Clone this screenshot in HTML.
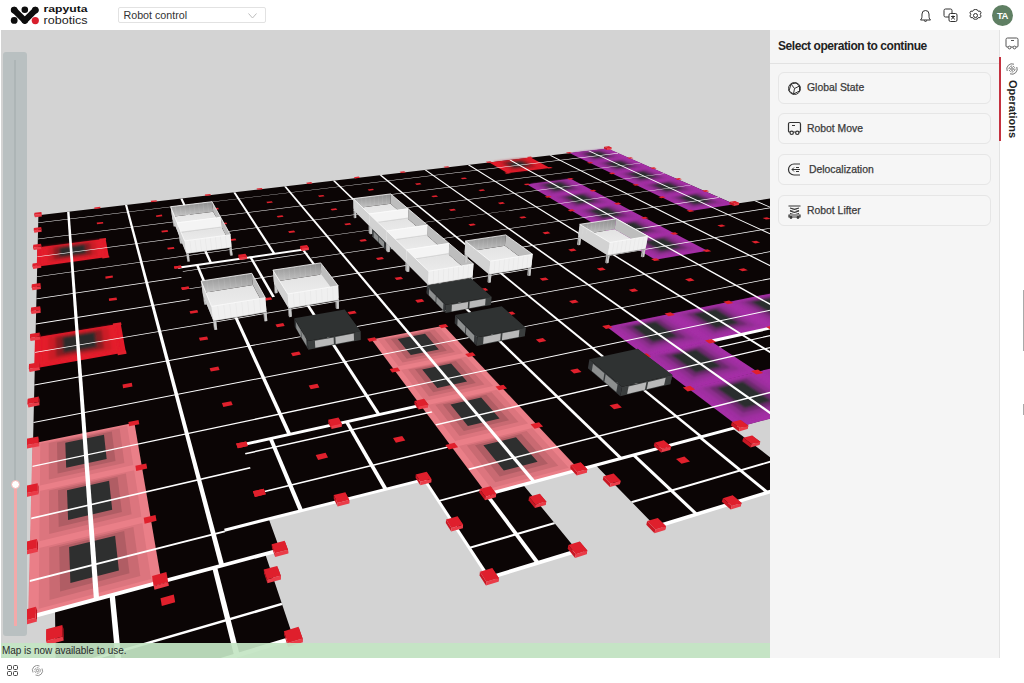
<!DOCTYPE html>
<html lang="en">
<head>
<meta charset="utf-8">
<title>Robot control</title>
<style>
*{box-sizing:border-box;margin:0;padding:0}
html,body{width:1024px;height:683px;overflow:hidden;background:#fff;font-family:"Liberation Sans",sans-serif;color:#222}
#hdr{position:absolute;left:0;top:0;width:1024px;height:30px;background:#fff}
#logo{position:absolute;left:0;top:0}
#sel{position:absolute;left:118px;top:7px;width:148px;height:16px;border:1px solid #e2e2e2;border-radius:2px;background:#fff;font-size:10.7px;line-height:14px;color:#333;padding-left:4.5px}
#sel svg{position:absolute;right:8px;top:5px}
#hicons{position:absolute;left:900px;top:0;width:124px;height:30px}
#avatar{position:absolute;left:992px;top:5px;width:21px;height:21px;border-radius:50%;background:#5f7f63;color:#fff;font-size:9.5px;font-weight:bold;text-align:center;line-height:21px;letter-spacing:-0.5px}
#view{position:absolute;left:1px;top:30px;width:769px;height:628px;background:#d3d3d3;overflow:hidden}
#scene{position:absolute;left:-1px;top:-30px}
#slider{position:absolute;left:2px;top:22px;width:24px;height:584px;border-radius:3px;background:#b9c0c1}
#toast{position:absolute;left:0;top:613px;width:769px;height:15px;background:rgba(196,229,196,0.93);font-size:10px;line-height:15px;color:#2a2a2a;padding-left:1px;letter-spacing:-0.04px}
#panel{position:absolute;left:770px;top:30px;width:230px;height:628px;background:#f5f5f5;border-right:1px solid #e3e3e3}
#ptitle{position:absolute;left:8px;top:8px;font-size:12px;font-weight:bold;letter-spacing:-0.45px;color:#222;line-height:16px;white-space:nowrap}
#pdiv{position:absolute;left:0;top:33px;width:229px;height:1px;background:#e2e2e2}
.op{position:absolute;left:8px;width:213px;height:31.4px;border:1px solid #e6e6e6;border-radius:6px;background:#f6f6f6;font-size:10.4px;line-height:30.4px;color:#3a3a3a;-webkit-text-stroke:0.25px #3a3a3a;padding-left:28px;white-space:nowrap}
.op svg{position:absolute;left:8px;top:7.5px}
#rail{position:absolute;left:1000px;top:30px;width:24px;height:628px;background:#fff}
#redbar{position:absolute;left:-1px;top:27px;width:2px;height:84px;background:#c4313f}
#optxt{position:absolute;left:4px;top:50px;width:18px;height:64px;writing-mode:vertical-rl;font-size:11px;font-weight:bold;color:#222;line-height:18px;white-space:nowrap}
#foot{position:absolute;left:0;top:658px;width:1024px;height:25px;background:#fff}
</style>
</head>
<body>
<div id="hdr">
<svg id="logo" width="100" height="30" viewBox="0 0 100 30">
<g fill="#0d0d0d">
<circle cx="14.2" cy="10.1" r="3.4"/><circle cx="35.3" cy="10.1" r="3.4"/>
<circle cx="14.2" cy="20.4" r="3.4"/>
<path d="M14.2 10.1 L24.8 20.6 L35.3 10.1" fill="none" stroke="#0d0d0d" stroke-width="6.2" stroke-linejoin="round" stroke-linecap="round"/>
<circle cx="24.8" cy="20.6" r="3.3"/>
<circle cx="24.8" cy="9.6" r="4.5" fill="#fff"/>
<circle cx="24.8" cy="9.7" r="3.3"/>
</g>
<circle cx="35.3" cy="20.6" r="3.6" fill="#d81e2c"/>
<text x="43.5" y="12" font-family="Liberation Sans, sans-serif" font-weight="bold" font-size="9.5" fill="#111" textLength="44" lengthAdjust="spacingAndGlyphs">rapyuta</text>
<text x="43.5" y="24.2" font-family="Liberation Sans, sans-serif" font-size="11" fill="#222" textLength="44" lengthAdjust="spacingAndGlyphs">robotics</text>
</svg>
<div id="sel">Robot control<svg width="9" height="6" viewBox="0 0 9 6"><path d="M0.5 0.5 L4.5 5 L8.5 0.5" fill="none" stroke="#bdbdbd" stroke-width="1"/></svg></div>
<div id="hicons">
<svg width="124" height="30" viewBox="0 0 124 30">
<g fill="none" stroke="#333" stroke-width="1">
<path d="M20.5 20 h10 c-1.5 -1.5 -1.5 -2.5 -1.5 -6 a3.5 3.5 0 0 0 -7 0 c0 3.500 0 4.500 -1.500 6 z M24.3 20.3 a1.2 1.200 0 0 0 2.400 0"/>
<rect x="44" y="9" width="8" height="8" rx="1.500"/><rect x="49" y="13.500" width="8" height="8" rx="1.500" fill="#fff"/>
<path d="M51 16.5 h4 M53 15.500 v1 M51.500 19.500 l1.500 -2.500 l1.500 2.500"/>
<circle cx="75.500" cy="15.500" r="2"/>
<path d="M75.500 9.500 l1.800 0.300 l1 1.500 l1.800 -0.200 l1 1.700 l-0.900 1.500 l0.900 1.700 l-1 1.700 l-1.800 -0.200 l-1 1.500 l-1.800 0.300 l-1.800 -0.300 l-1 -1.500 l-1.800 0.200 l-1 -1.700 l0.900 -1.700 l-0.900 -1.500 l1 -1.700 l1.800 0.200 l1 -1.500 z"/>
</g>
</svg>
</div>
<div id="avatar">TA</div>
</div>
<div id="view">
<svg id="scene" width="770" height="658" viewBox="0 0 770 658">
<defs>
<filter id="bpurple" x="-5%" y="-5%" width="110%" height="110%"><feGaussianBlur stdDeviation="0.9"/></filter>
<filter id="bred" x="-5%" y="-5%" width="110%" height="110%"><feGaussianBlur stdDeviation="1.8"/></filter>
<linearGradient id="gfl" x1="0" y1="0" x2="0" y2="1"><stop offset="0" stop-color="#e3e3e3"/><stop offset="1" stop-color="#f1f1f1"/></linearGradient>
<linearGradient id="gbk" x1="0" y1="0" x2="0" y2="1"><stop offset="0" stop-color="#8c8c8c"/><stop offset="1" stop-color="#c6c6c6"/></linearGradient>
</defs><polygon points="38.4,215.3 607.6,148.7 734.1,204.1 854.5,185.7 1193.9,304.6 732.6,428.5 802.2,481.8 655.8,526.7 595.8,465.2 523.1,484.7 577.2,550.8 489.0,577.9 423.4,479.6 268.8,518.9 280.0,550.0 265.2,554.0 293.4,637.9 56.3,710.7 55.0,610.4 28.9,617.4" fill="#0b0505"/>
<polygon points="37.2,247.6 105.6,238.8 108.9,256.8 36.8,266.7" fill="#e31b2a"/>
<g filter="url(#bred)">
<polygon points="42.5,247.6 100.7,240.0 103.3,255.9 42.3,264.2" fill="#e31b2a"/>
<polygon points="48.0,247.4 95.5,241.2 97.6,255.2 48.1,261.9" fill="#cc1a27"/>
<polygon points="53.5,247.2 90.2,242.4 91.8,254.4 53.8,259.5" fill="#8a1a20"/>
<polygon points="59.1,247.2 84.9,243.8 86.1,253.7 59.4,257.3" fill="#2c2b2b"/>
</g>
<polygon points="35.0,337.6 120.7,323.6 125.9,352.3 34.2,368.4" fill="#e31b2a"/>
<g filter="url(#bred)">
<polygon points="41.6,337.6 114.7,325.6 118.8,350.9 41.4,364.4" fill="#e31b2a"/>
<polygon points="48.6,337.3 108.2,327.5 111.4,349.7 48.7,360.5" fill="#cc1a27"/>
<polygon points="55.6,337.0 101.6,329.4 104.1,348.5 56.0,356.8" fill="#8a1a20"/>
<polygon points="62.5,337.0 95.0,331.6 96.8,347.3 63.2,353.1" fill="#2c2b2b"/>
</g>
<polygon points="489.3,162.4 530.6,157.6 550.0,167.9 507.4,173.1" fill="#e31b2a"/>
<g filter="url(#bred)">
<polygon points="493.1,162.4 528.2,158.3 545.2,167.3 509.1,171.7" fill="#e31b2a"/>
<polygon points="496.9,162.3 525.5,159.0 540.3,166.9 511.0,170.5" fill="#cc1a27"/>
<polygon points="500.8,162.3 522.8,159.7 535.4,166.5 512.9,169.2" fill="#8a1a20"/>
<polygon points="504.8,162.3 520.3,160.4 530.6,166.0 514.8,167.9" fill="#2c2b2b"/>
</g>
<polygon points="32.4,443.4 134.4,422.7 161.6,582.3 28.1,618.1" fill="#ea7f88"/>
<g>
<polygon points="40.3,443.4 127.2,425.7 133.3,464.9 39.9,485.4" fill="#dc757e"/>
<polygon points="48.7,443.0 119.6,428.5 124.4,463.0 48.9,479.4" fill="#c96a72"/>
<polygon points="57.0,442.6 111.8,431.4 115.5,461.0 57.6,473.6" fill="#b05d64"/>
<polygon points="65.3,442.7 104.0,434.7 106.7,459.1 66.2,467.8" fill="#2e2f2f"/>
<polygon points="39.8,491.1 134.2,470.2 141.4,516.7 39.3,541.2" fill="#dc757e"/>
<polygon points="48.9,490.6 125.9,473.5 131.6,514.3 49.2,534.0" fill="#c96a72"/>
<polygon points="58.0,490.2 117.5,476.9 121.9,512.0 58.7,527.0" fill="#b05d64"/>
<polygon points="67.0,490.2 109.1,480.8 112.2,509.8 68.1,520.1" fill="#2e2f2f"/>
<polygon points="39.3,548.0 142.4,522.9 151.1,578.9 38.7,608.8" fill="#dc757e"/>
<polygon points="49.2,547.5 133.4,526.9 140.3,576.1 49.5,600.0" fill="#c96a72"/>
<polygon points="59.2,546.9 124.2,531.0 129.5,573.3 60.1,591.5" fill="#b05d64"/>
<polygon points="69.1,547.0 115.1,535.7 118.9,570.5 70.4,583.1" fill="#2e2f2f"/>
</g>
<polygon points="371.5,339.4 443.8,325.8 579.3,470.0 487.3,494.7" fill="#ea7f88"/>
<g>
<polygon points="377.9,339.4 439.4,327.8 463.0,353.3 398.4,366.3" fill="#dc757e"/>
<polygon points="384.4,339.1 434.6,329.6 454.9,352.1 402.6,362.6" fill="#c96a72"/>
<polygon points="390.9,338.9 429.7,331.5 446.9,350.8 406.7,358.8" fill="#b05d64"/>
<polygon points="397.7,338.9 425.0,333.7 438.9,349.6 410.8,355.1" fill="#2e2f2f"/>
<polygon points="401.1,369.9 466.1,356.7 493.2,385.9 424.7,400.9" fill="#dc757e"/>
<polygon points="408.1,369.6 461.1,358.8 484.4,384.5 429.0,396.6" fill="#c96a72"/>
<polygon points="415.0,369.3 456.0,361.0 475.8,383.0 433.2,392.3" fill="#b05d64"/>
<polygon points="422.2,369.4 451.1,363.4 467.1,381.6 437.3,388.0" fill="#2e2f2f"/>
<polygon points="427.8,405.1 496.8,389.8 528.1,423.6 455.2,441.1" fill="#dc757e"/>
<polygon points="435.3,404.7 491.5,392.2 518.5,421.9 459.5,436.0" fill="#c96a72"/>
<polygon points="442.8,404.4 486.2,394.7 509.1,420.3 463.8,431.0" fill="#b05d64"/>
<polygon points="450.5,404.5 481.2,397.6 499.6,418.6 467.9,426.1" fill="#2e2f2f"/>
<polygon points="458.9,445.9 532.2,428.1 568.8,467.7 491.1,488.3" fill="#dc757e"/>
<polygon points="466.9,445.6 526.7,431.0 558.3,465.7 495.4,482.3" fill="#c96a72"/>
<polygon points="475.0,445.2 521.2,433.9 547.9,463.8 499.7,476.4" fill="#b05d64"/>
<polygon points="483.4,445.2 516.0,437.2 537.6,461.8 503.8,470.6" fill="#2e2f2f"/>
</g>
<polygon points="569.4,153.1 607.7,148.6 734.5,204.2 690.3,211.0" fill="#a52fa6"/>
<g filter="url(#bpurple)">
<polygon points="573.0,153.1 605.6,149.2 624.6,157.6 591.2,161.7" fill="#9f2ea0"/>
<polygon points="576.7,153.0 603.2,149.9 619.8,157.2 592.6,160.5" fill="#8e2d8f"/>
<polygon points="580.4,152.9 600.9,150.5 615.0,156.8 594.1,159.3" fill="#6c2c6d"/>
<polygon points="584.2,152.9 598.7,151.2 610.2,156.4 595.5,158.2" fill="#2c2f2f"/>
<polygon points="593.5,162.8 627.0,158.7 647.5,167.7 613.1,172.1" fill="#9f2ea0"/>
<polygon points="597.3,162.7 624.6,159.4 642.5,167.3 614.6,170.9" fill="#8e2d8f"/>
<polygon points="601.1,162.6 622.2,160.0 637.4,166.9 616.0,169.6" fill="#6c2c6d"/>
<polygon points="605.1,162.7 620.0,160.8 632.4,166.4 617.4,168.3" fill="#2c2f2f"/>
<polygon points="615.7,173.3 650.2,168.9 672.3,178.7 636.9,183.5" fill="#9f2ea0"/>
<polygon points="619.6,173.3 647.7,169.6 667.0,178.2 638.3,182.1" fill="#8e2d8f"/>
<polygon points="623.6,173.2 645.3,170.3 661.8,177.7 639.7,180.7" fill="#6c2c6d"/>
<polygon points="627.8,173.2 643.0,171.2 656.5,177.3 641.0,179.3" fill="#2c2f2f"/>
<polygon points="639.7,184.8 675.2,179.9 699.3,190.5 662.8,195.8" fill="#9f2ea0"/>
<polygon points="643.8,184.7 672.7,180.7 693.7,190.0 664.1,194.3" fill="#8e2d8f"/>
<polygon points="647.9,184.6 670.2,181.5 688.2,189.5 665.4,192.8" fill="#6c2c6d"/>
<polygon points="652.3,184.6 668.0,182.4 682.6,189.0 666.6,191.3" fill="#2c2f2f"/>
<polygon points="665.8,197.2 702.4,191.9 728.6,203.5 691.1,209.2" fill="#9f2ea0"/>
<polygon points="670.1,197.1 699.9,192.8 722.8,202.9 692.3,207.6" fill="#8e2d8f"/>
<polygon points="674.4,197.0 697.4,193.6 716.9,202.4 693.5,205.9" fill="#6c2c6d"/>
<polygon points="678.9,197.0 695.1,194.6 711.1,201.8 694.6,204.3" fill="#2c2f2f"/>
</g>
<polygon points="526.7,184.3 570.6,178.7 707.4,250.7 655.3,259.8" fill="#a52fa6"/>
<g filter="url(#bpurple)">
<polygon points="530.8,184.3 568.1,179.5 588.1,190.1 549.6,195.3" fill="#9f2ea0"/>
<polygon points="534.9,184.2 565.3,180.3 582.7,189.6 551.5,193.8" fill="#8e2d8f"/>
<polygon points="539.0,184.1 562.5,181.1 577.4,189.1 553.4,192.3" fill="#6c2c6d"/>
<polygon points="543.4,184.2 560.0,182.0 572.0,188.6 555.2,190.8" fill="#2c2f2f"/>
<polygon points="552.1,196.7 590.7,191.5 612.4,203.0 572.7,208.7" fill="#9f2ea0"/>
<polygon points="556.4,196.6 587.8,192.3 606.8,202.5 574.5,207.1" fill="#8e2d8f"/>
<polygon points="560.7,196.5 585.0,193.2 601.1,201.9 576.3,205.4" fill="#6c2c6d"/>
<polygon points="565.3,196.5 582.4,194.2 595.5,201.4 578.1,203.8" fill="#2c2f2f"/>
<polygon points="575.4,210.3 615.2,204.5 639.1,217.2 598.0,223.4" fill="#9f2ea0"/>
<polygon points="579.9,210.2 612.4,205.5 633.1,216.5 599.7,221.6" fill="#8e2d8f"/>
<polygon points="584.4,210.0 609.5,206.4 627.1,215.9 601.5,219.8" fill="#6c2c6d"/>
<polygon points="589.1,210.1 606.8,207.5 621.2,215.3 603.2,218.0" fill="#2c2f2f"/>
<polygon points="600.9,225.1 642.1,218.8 668.3,232.7 625.8,239.6" fill="#9f2ea0"/>
<polygon points="605.6,225.0 639.2,219.8 662.0,232.0 627.5,237.6" fill="#8e2d8f"/>
<polygon points="610.3,224.9 636.3,220.9 655.7,231.3 629.1,235.6" fill="#6c2c6d"/>
<polygon points="615.3,224.9 633.6,222.1 649.4,230.7 630.8,233.7" fill="#2c2f2f"/>
<polygon points="629.0,241.5 671.7,234.5 700.6,249.8 656.5,257.5" fill="#9f2ea0"/>
<polygon points="633.9,241.3 668.7,235.6 693.9,249.1 658.1,255.3" fill="#8e2d8f"/>
<polygon points="638.9,241.2 665.8,236.8 687.2,248.3 659.7,253.1" fill="#6c2c6d"/>
<polygon points="644.1,241.2 663.0,238.1 680.5,247.6 661.2,250.9" fill="#2c2f2f"/>
</g>
<polygon points="606.7,326.8 1018.8,243.1 1071.6,261.6 645.2,355.9" fill="#a52fa6"/>
<g filter="url(#bpurple)">
<polygon points="612.9,326.8 666.5,315.9 702.6,339.9 646.8,352.2" fill="#9f2ea0"/>
<polygon points="619.1,326.5 662.8,317.6 694.2,338.7 648.9,348.6" fill="#8e2d8f"/>
<polygon points="625.3,326.3 659.1,319.4 685.8,337.6 651.0,345.1" fill="#6c2c6d"/>
<polygon points="631.8,326.3 655.6,321.5 677.4,336.4 653.0,341.7" fill="#2c2f2f"/>
<polygon points="675.0,314.1 725.5,303.9 763.8,326.5 711.4,338.0" fill="#9f2ea0"/>
<polygon points="681.0,313.9 722.1,305.5 755.5,325.4 713.0,334.6" fill="#8e2d8f"/>
<polygon points="686.9,313.7 718.7,307.2 747.1,324.3 714.5,331.4" fill="#6c2c6d"/>
<polygon points="693.3,313.7 715.7,309.1 738.9,323.2 716.0,328.1" fill="#2c2f2f"/>
<polygon points="733.5,302.2 781.1,292.5 821.3,313.9 772.1,324.7" fill="#9f2ea0"/>
<polygon points="739.2,302.0 778.0,294.1 813.0,312.8 773.1,321.5" fill="#8e2d8f"/>
<polygon points="745.0,301.8 775.0,295.7 804.8,311.8 774.1,318.4" fill="#6c2c6d"/>
<polygon points="751.2,301.8 772.3,297.5 796.7,310.8 775.1,315.4" fill="#2c2f2f"/>
<polygon points="788.6,291.0 833.6,281.8 875.4,302.0 829.1,312.2" fill="#9f2ea0"/>
<polygon points="794.2,290.8 830.9,283.3 867.3,301.0 829.7,309.2" fill="#8e2d8f"/>
<polygon points="799.8,290.6 828.1,284.8 859.2,300.0 830.2,306.3" fill="#6c2c6d"/>
<polygon points="805.8,290.6 825.7,286.5 851.1,299.0 830.8,303.4" fill="#2c2f2f"/>
<polygon points="840.7,280.4 883.3,271.7 926.5,290.8 882.8,300.4" fill="#9f2ea0"/>
<polygon points="846.1,280.2 880.8,273.1 918.5,289.8 883.0,297.6" fill="#8e2d8f"/>
<polygon points="851.5,280.0 878.3,274.5 910.5,288.9 883.1,294.8" fill="#6c2c6d"/>
<polygon points="857.4,280.0 876.2,276.2 902.5,288.0 883.3,292.1" fill="#2c2f2f"/>
<polygon points="890.0,270.3 930.4,262.1 974.7,280.2 933.4,289.2" fill="#9f2ea0"/>
<polygon points="895.3,270.2 928.1,263.5 966.8,279.3 933.3,286.6" fill="#8e2d8f"/>
<polygon points="900.5,270.0 925.9,264.8 958.9,278.4 933.1,284.0" fill="#6c2c6d"/>
<polygon points="906.2,270.0 924.0,266.3 951.1,277.6 932.9,281.5" fill="#2c2f2f"/>
<polygon points="936.8,260.8 975.0,253.0 1020.4,270.1 981.3,278.7" fill="#9f2ea0"/>
<polygon points="941.8,260.7 973.0,254.3 1012.6,269.3 980.8,276.2" fill="#8e2d8f"/>
<polygon points="946.9,260.5 971.0,255.6 1004.8,268.5 980.3,273.8" fill="#6c2c6d"/>
<polygon points="952.4,260.5 969.4,257.0 997.1,267.7 979.9,271.4" fill="#2c2f2f"/>
<polygon points="981.1,251.8 1017.5,244.4 1063.7,260.6 1026.6,268.8" fill="#9f2ea0"/>
<polygon points="986.0,251.6 1015.6,245.6 1056.0,259.9 1025.8,266.4" fill="#8e2d8f"/>
<polygon points="990.9,251.5 1013.8,246.8 1048.3,259.1 1025.1,264.1" fill="#6c2c6d"/>
<polygon points="996.3,251.5 1012.4,248.2 1040.7,258.3 1024.4,261.8" fill="#2c2f2f"/>
</g>
<polygon points="644.7,355.5 710.6,341.0 757.9,372.1 688.8,388.9" fill="#a52fa6"/>
<g filter="url(#bpurple)">
<polygon points="651.3,355.5 707.4,343.1 748.6,370.5 690.1,384.6" fill="#9f2ea0"/>
<polygon points="657.9,355.3 703.6,345.1 739.4,369.2 692.0,380.5" fill="#8e2d8f"/>
<polygon points="664.5,355.0 699.8,347.1 730.3,367.8 693.9,376.5" fill="#6c2c6d"/>
<polygon points="671.5,355.0 696.4,349.5 721.2,366.5 695.7,372.5" fill="#2c2f2f"/>
</g>
<polygon points="688.2,388.5 1128.9,281.7 1194.6,304.7 739.2,427.0" fill="#a52fa6"/>
<g filter="url(#bpurple)">
<polygon points="695.3,388.4 754.0,374.1 801.4,405.7 740.2,422.0" fill="#9f2ea0"/>
<polygon points="702.3,388.1 750.2,376.4 791.4,404.2 741.7,417.3" fill="#8e2d8f"/>
<polygon points="709.4,387.8 746.4,378.8 781.4,402.6 743.3,412.6" fill="#6c2c6d"/>
<polygon points="716.9,387.9 742.9,381.5 771.5,401.1 744.8,408.0" fill="#2c2f2f"/>
<polygon points="763.3,371.9 818.1,358.6 868.0,388.0 811.0,403.2" fill="#9f2ea0"/>
<polygon points="770.0,371.6 814.7,360.7 858.1,386.6 811.9,398.8" fill="#8e2d8f"/>
<polygon points="776.8,371.3 811.3,362.9 848.3,385.1 812.8,394.4" fill="#6c2c6d"/>
<polygon points="784.0,371.4 808.4,365.4 838.5,383.7 813.6,390.2" fill="#2c2f2f"/>
<polygon points="826.7,356.5 878.1,344.0 929.9,371.5 876.9,385.6" fill="#9f2ea0"/>
<polygon points="833.2,356.2 875.0,346.0 920.2,370.2 877.2,381.5" fill="#8e2d8f"/>
<polygon points="839.7,355.9 872.0,348.0 910.6,368.8 877.5,377.5" fill="#6c2c6d"/>
<polygon points="846.7,356.0 869.5,350.4 901.0,367.5 877.7,373.5" fill="#2c2f2f"/>
<polygon points="886.1,342.0 934.3,330.3 987.8,356.1 938.3,369.3" fill="#9f2ea0"/>
<polygon points="892.4,341.8 931.6,332.2 978.2,354.8 938.0,365.5" fill="#8e2d8f"/>
<polygon points="898.6,341.5 928.9,334.1 968.7,353.6 937.8,361.7" fill="#6c2c6d"/>
<polygon points="905.4,341.5 926.8,336.3 959.3,352.3 937.6,358.0" fill="#2c2f2f"/>
<polygon points="941.8,328.5 987.0,317.5 1042.0,341.7 995.6,354.0" fill="#9f2ea0"/>
<polygon points="947.9,328.2 984.7,319.2 1032.6,340.5 994.9,350.4" fill="#8e2d8f"/>
<polygon points="953.9,328.0 982.3,321.0 1023.2,339.3 994.2,346.9" fill="#6c2c6d"/>
<polygon points="960.5,328.0 980.5,323.1 1013.9,338.2 993.6,343.4" fill="#2c2f2f"/>
<polygon points="994.2,315.7 1036.7,305.4 1092.7,328.2 1049.3,339.7" fill="#9f2ea0"/>
<polygon points="1000.0,315.5 1034.6,307.1 1083.5,327.1 1048.2,336.4" fill="#8e2d8f"/>
<polygon points="1005.8,315.3 1032.5,308.7 1074.3,325.9 1047.1,333.1" fill="#6c2c6d"/>
<polygon points="1012.2,315.3 1031.0,310.7 1065.2,324.8 1046.1,329.8" fill="#2c2f2f"/>
<polygon points="1043.4,303.7 1083.6,294.0 1140.5,315.5 1099.6,326.3" fill="#9f2ea0"/>
<polygon points="1049.1,303.5 1081.7,295.6 1131.4,314.4 1098.2,323.2" fill="#8e2d8f"/>
<polygon points="1054.7,303.3 1079.9,297.2 1122.4,313.4 1096.8,320.1" fill="#6c2c6d"/>
<polygon points="1060.9,303.4 1078.6,299.0 1113.4,312.3 1095.4,317.0" fill="#2c2f2f"/>
<polygon points="1089.9,292.4 1127.8,283.2 1185.4,303.5 1146.9,313.7" fill="#9f2ea0"/>
<polygon points="1095.3,292.2 1126.2,284.7 1176.5,302.5 1145.2,310.8" fill="#8e2d8f"/>
<polygon points="1100.8,292.1 1124.6,286.2 1167.6,301.5 1143.5,307.8" fill="#6c2c6d"/>
<polygon points="1106.8,292.1 1123.6,288.0 1158.8,300.6 1141.8,304.9" fill="#2c2f2f"/>
</g>
<polygon points="67.1,211.9 69.5,211.6 99.1,598.6 93.9,600.0" fill="#fff"/>
<polygon points="125.0,205.1 127.2,204.9 224.2,565.0 219.4,566.3" fill="#fff"/>
<polygon points="284.1,186.5 286.1,186.3 535.8,481.3 532.2,482.3" fill="#fff"/>
<polygon points="332.9,180.8 334.8,180.6 622.8,458.0 619.5,458.9" fill="#fff"/>
<polygon points="379.6,175.3 381.5,175.1 703.0,436.4 699.9,437.3" fill="#fff"/>
<polygon points="424.6,170.1 426.4,169.9 777.2,416.5 774.3,417.3" fill="#fff"/>
<polygon points="467.8,165.0 469.5,164.8 846.0,398.0 843.3,398.8" fill="#fff"/>
<polygon points="509.4,160.2 511.1,160.0 910.0,380.9 907.5,381.5" fill="#fff"/>
<polygon points="549.5,155.5 551.1,155.3 969.6,364.8 967.3,365.5" fill="#fff"/>
<polygon points="588.1,151.0 589.6,150.8 1025.4,349.9 1023.2,350.4" fill="#fff"/>
<polygon points="180.3,198.7 182.5,198.4 211.9,262.2 209.3,262.6" fill="#fff"/>
<polygon points="233.6,316.1 236.6,315.6 291.3,433.9 287.5,434.8" fill="#fff"/>
<polygon points="233.3,192.5 235.4,192.2 275.2,253.1 272.7,253.4" fill="#fff"/>
<polygon points="305.5,304.1 308.3,303.6 380.6,414.2 377.2,415.0" fill="#fff"/>
<polygon points="754.4,201.0 756.1,200.8 1077.6,335.8 1075.6,336.4" fill="#fff"/>
<polygon points="795.4,194.7 797.0,194.5 1126.6,322.7 1124.7,323.2" fill="#fff"/>
<polygon points="834.7,188.7 836.2,188.5 1172.7,310.3 1171.0,310.8" fill="#fff"/>
<polygon points="38.2,222.6 617.8,153.1 618.4,153.4 38.2,223.0" fill="#fff"/>
<polygon points="37.8,238.7 640.0,162.9 640.7,163.2 37.8,239.2" fill="#fff"/>
<polygon points="37.4,256.5 664.1,173.4 664.8,173.8 37.4,257.1" fill="#fff"/>
<polygon points="36.9,276.4 690.1,184.9 691.0,185.2 36.9,277.0" fill="#fff"/>
<polygon points="36.4,298.6 181.3,277.1 181.5,277.7 36.4,299.3" fill="#fff"/>
<polygon points="311.1,257.8 718.5,197.3 719.4,197.7 311.5,258.3" fill="#fff"/>
<polygon points="35.8,323.6 189.4,299.3 189.6,300.0 35.8,324.4" fill="#fff"/>
<polygon points="326.0,277.7 871.4,191.6 872.5,192.0 326.5,278.4" fill="#fff"/>
<polygon points="35.2,351.9 908.6,204.6 909.8,205.0 35.1,352.8" fill="#fff"/>
<polygon points="34.4,384.4 949.3,218.9 950.6,219.4 34.4,385.4" fill="#fff"/>
<polygon points="33.5,421.9 994.1,234.6 995.5,235.1 33.5,423.1" fill="#fff"/>
<polygon points="32.5,465.7 1043.5,251.9 1045.0,252.4 32.5,467.1" fill="#fff"/>
<polygon points="31.3,517.6 250.0,467.1 250.6,468.5 31.2,519.3" fill="#fff"/>
<polygon points="435.4,424.3 1098.3,271.1 1100.1,271.7 436.3,425.5" fill="#fff"/>
<polygon points="29.8,580.1 224.6,530.5 225.1,532.3 29.8,582.1" fill="#fff"/>
<polygon points="468.4,468.5 1159.5,292.6 1161.5,293.2 469.4,469.9" fill="#fff"/>
<polygon points="177.6,266.7 304.2,248.5 305.5,250.3 178.3,268.7" fill="#fff"/>
<polygon points="195.6,264.5 198.2,264.2 215.7,305.7 212.8,306.1" fill="#fff"/>
<polygon points="249.0,256.8 251.5,256.5 275.0,296.8 272.2,297.3" fill="#fff"/>
<polygon points="301.4,249.3 303.8,248.9 332.0,286.8 329.4,287.2" fill="#fff"/>
<polygon points="182.7,271.2 307.5,252.9 307.9,253.5 182.9,271.8" fill="#fff"/>
<polygon points="189.1,288.4 319.1,268.5 319.5,269.1 189.4,289.1" fill="#fff"/>
<polygon points="241.5,443.4 420.2,404.0 422.1,406.5 242.5,446.3" fill="#fff"/>
<polygon points="245.0,453.1 431.5,411.2 432.4,412.4 245.5,454.5" fill="#fff"/>
<polygon points="264.3,490.7 451.2,445.5 452.2,446.8 264.8,492.3" fill="#fff"/>
<polygon points="224.1,528.7 422.6,478.4 424.2,480.9 224.9,531.7" fill="#fff"/>
<polygon points="268.8,438.9 272.5,438.1 303.1,510.2 298.9,511.3" fill="#fff"/>
<polygon points="344.8,422.1 348.3,421.3 387.6,488.7 383.7,489.7" fill="#fff"/>
<polygon points="29.0,615.3 279.4,548.3 280.7,551.7 28.9,619.5" fill="#fff"/>
<polygon points="109.6,595.8 114.8,594.4 124.4,689.8 118.5,691.6" fill="#fff"/>
<polygon points="212.3,568.2 217.1,566.9 239.6,654.5 234.2,656.1" fill="#fff"/>
<polygon points="55.8,668.5 281.6,602.8 282.4,605.1 55.8,671.2" fill="#fff"/>
<polygon points="56.3,708.3 292.8,635.9 294.1,640.0 56.4,713.2" fill="#fff"/>
<polygon points="484.8,495.0 488.6,494.0 539.7,562.3 535.6,563.6" fill="#fff"/>
<polygon points="437.1,500.5 483.2,488.3 484.3,489.8 438.1,502.1" fill="#fff"/>
<polygon points="468.7,547.0 553.8,522.3 555.2,524.0 469.9,548.8" fill="#fff"/>
<polygon points="487.9,576.2 575.9,549.3 578.5,552.4 490.1,579.6" fill="#fff"/>
<polygon points="422.9,479.7 425.8,479.0 490.6,577.4 487.4,578.4" fill="#fff"/>
<polygon points="632.0,455.5 635.3,454.6 698.3,513.7 694.8,514.8" fill="#fff"/>
<polygon points="698.4,437.7 701.5,436.8 769.1,491.9 765.8,493.0" fill="#fff"/>
<polygon points="631.0,501.3 773.5,459.8 775.4,461.2 632.6,502.9" fill="#fff"/>
<polygon points="654.4,525.2 800.6,480.5 803.8,483.0 657.3,528.2" fill="#fff"/>
<polygon points="486.6,492.8 737.8,425.5 740.8,427.8 488.7,495.7" fill="#fff"/>
<polygon points="708.8,340.1 1068.8,260.8 1073.2,262.3 712.3,342.4" fill="#fff"/>
<polygon points="718.7,346.6 1081.2,265.1 1082.9,265.7 720.0,347.5" fill="#fff"/>
<polygon points="94.3,207.4 100.3,206.7 100.5,208.2 94.5,208.9" fill="#e0202c"/>
<polygon points="96.7,222.6 103.0,221.9 103.3,223.5 97.0,224.3" fill="#e0202c"/>
<polygon points="99.3,238.8 105.9,237.9 106.2,239.7 99.6,240.6" fill="#e0202c"/>
<polygon points="102.1,256.6 109.1,255.7 109.4,257.6 102.4,258.6" fill="#e0202c"/>
<polygon points="105.3,276.4 112.6,275.4 113.0,277.6 105.6,278.7" fill="#e0202c"/>
<polygon points="108.8,298.6 116.5,297.5 117.0,299.9 109.2,301.1" fill="#e0202c"/>
<polygon points="112.8,323.6 121.0,322.3 121.5,325.1 113.2,326.5" fill="#e0202c"/>
<polygon points="117.3,352.0 126.0,350.5 126.6,353.7 117.8,355.2" fill="#e0202c"/>
<polygon points="122.5,384.5 131.8,382.7 132.5,386.4 123.1,388.2" fill="#e0202c"/>
<polygon points="128.4,422.0 138.5,419.9 139.3,424.2 129.1,426.3" fill="#e0202c"/>
<polygon points="135.4,465.8 146.3,463.4 147.2,468.4 136.2,470.9" fill="#e0202c"/>
<polygon points="143.7,517.7 155.5,514.9 156.6,520.8 144.6,523.7" fill="#e0202c"/>
<polygon points="150.7,200.8 156.5,200.2 157.0,201.6 151.2,202.3" fill="#e0202c"/>
<polygon points="155.9,215.4 161.8,214.6 162.4,216.2 156.4,216.9" fill="#e0202c"/>
<polygon points="161.3,230.8 167.5,230.0 168.2,231.7 161.9,232.5" fill="#e0202c"/>
<polygon points="167.2,247.8 173.8,246.9 174.5,248.7 167.9,249.6" fill="#e0202c"/>
<polygon points="173.9,266.6 180.8,265.6 181.6,267.7 174.6,268.7" fill="#e0202c"/>
<polygon points="181.2,287.6 188.5,286.5 189.4,288.8 182.1,289.9" fill="#e0202c"/>
<polygon points="189.5,311.2 197.3,309.9 198.2,312.5 190.5,313.8" fill="#e0202c"/>
<polygon points="198.9,337.8 207.1,336.4 208.2,339.4 200.0,340.8" fill="#e0202c"/>
<polygon points="209.6,368.2 218.3,366.5 219.6,370.0 210.8,371.6" fill="#e0202c"/>
<polygon points="221.9,403.1 231.2,401.2 232.7,405.1 223.3,407.1" fill="#e0202c"/>
<polygon points="236.1,443.6 246.2,441.4 247.9,446.1 237.8,448.3" fill="#e0202c"/>
<polygon points="252.9,491.3 263.7,488.7 265.8,494.2 254.9,496.9" fill="#e0202c"/>
<polygon points="204.8,194.5 210.3,193.9 211.0,195.3 205.5,195.9" fill="#e0202c"/>
<polygon points="212.3,208.5 218.1,207.8 218.9,209.2 213.1,209.9" fill="#e0202c"/>
<polygon points="220.3,223.2 226.3,222.4 227.2,224.0 221.2,224.8" fill="#e0202c"/>
<polygon points="229.1,239.3 235.4,238.5 236.4,240.3 230.1,241.1" fill="#e0202c"/>
<polygon points="238.9,257.2 245.4,256.3 246.6,258.3 240.0,259.2" fill="#e0202c"/>
<polygon points="275.5,324.5 283.2,323.1 284.7,326.0 277.0,327.3" fill="#e0202c"/>
<polygon points="291.0,352.9 299.1,351.4 300.9,354.6 292.7,356.2" fill="#e0202c"/>
<polygon points="308.7,385.5 317.4,383.7 319.4,387.4 310.7,389.2" fill="#e0202c"/>
<polygon points="329.2,423.2 338.4,421.1 340.9,425.4 331.5,427.5" fill="#e0202c"/>
<polygon points="256.5,188.5 261.8,187.9 262.8,189.2 257.5,189.8" fill="#e0202c"/>
<polygon points="266.3,201.8 271.8,201.2 272.9,202.6 267.4,203.3" fill="#e0202c"/>
<polygon points="276.7,215.9 282.4,215.2 283.6,216.7 277.8,217.5" fill="#e0202c"/>
<polygon points="288.1,231.3 294.0,230.5 295.3,232.2 289.3,233.0" fill="#e0202c"/>
<polygon points="300.6,248.3 306.8,247.5 308.3,249.3 302.0,250.2" fill="#e0202c"/>
<polygon points="347.4,311.9 354.7,310.7 356.7,313.3 349.4,314.6" fill="#e0202c"/>
<polygon points="367.1,338.7 374.8,337.2 377.0,340.3 369.4,341.7" fill="#e0202c"/>
<polygon points="389.6,369.1 397.7,367.5 400.3,370.9 392.1,372.6" fill="#e0202c"/>
<polygon points="415.4,404.2 424.0,402.3 427.0,406.3 418.3,408.2" fill="#e0202c"/>
<polygon points="306.2,182.7 311.2,182.1 312.4,183.4 307.3,184.0" fill="#e0202c"/>
<polygon points="318.0,195.5 323.3,194.9 324.6,196.2 319.3,196.9" fill="#e0202c"/>
<polygon points="330.5,209.0 336.0,208.2 337.4,209.7 331.9,210.4" fill="#e0202c"/>
<polygon points="344.2,223.7 349.9,222.9 351.4,224.5 345.7,225.3" fill="#e0202c"/>
<polygon points="359.3,239.9 365.2,239.1 366.9,240.9 360.9,241.7" fill="#e0202c"/>
<polygon points="375.9,257.9 382.1,256.9 384.0,258.9 377.8,259.9" fill="#e0202c"/>
<polygon points="394.5,277.8 401.0,276.8 403.1,279.0 396.6,280.1" fill="#e0202c"/>
<polygon points="415.2,300.1 422.0,299.0 424.4,301.5 417.5,302.7" fill="#e0202c"/>
<polygon points="438.6,325.3 445.8,324.0 448.4,326.8 441.2,328.2" fill="#e0202c"/>
<polygon points="465.1,353.9 472.7,352.3 475.7,355.6 468.1,357.1" fill="#e0202c"/>
<polygon points="495.5,386.6 503.5,384.8 507.0,388.5 498.9,390.3" fill="#e0202c"/>
<polygon points="530.6,424.3 539.0,422.3 543.1,426.6 534.6,428.7" fill="#e0202c"/>
<polygon points="353.8,177.2 358.7,176.6 360.0,177.8 355.2,178.4" fill="#e0202c"/>
<polygon points="367.6,189.4 372.6,188.8 374.1,190.1 369.0,190.8" fill="#e0202c"/>
<polygon points="382.0,202.3 387.2,201.6 388.8,203.1 383.6,203.7" fill="#e0202c"/>
<polygon points="397.8,216.4 403.2,215.7 405.0,217.2 399.5,218.0" fill="#e0202c"/>
<polygon points="415.1,231.9 420.8,231.1 422.7,232.8 417.0,233.6" fill="#e0202c"/>
<polygon points="434.2,248.9 440.1,248.0 442.3,249.9 436.4,250.9" fill="#e0202c"/>
<polygon points="455.5,267.9 461.6,266.9 464.0,269.0 457.9,270.0" fill="#e0202c"/>
<polygon points="479.2,289.0 485.6,287.9 488.3,290.3 481.8,291.4" fill="#e0202c"/>
<polygon points="505.7,312.7 512.5,311.5 515.5,314.1 508.7,315.4" fill="#e0202c"/>
<polygon points="535.8,339.6 542.9,338.1 546.3,341.1 539.2,342.6" fill="#e0202c"/>
<polygon points="570.1,370.1 577.5,368.5 581.5,371.9 574.0,373.6" fill="#e0202c"/>
<polygon points="609.5,405.3 617.4,403.4 621.9,407.4 614.0,409.3" fill="#e0202c"/>
<polygon points="399.6,171.8 404.2,171.3 405.8,172.4 401.1,173.0" fill="#e0202c"/>
<polygon points="415.0,183.6 419.9,183.0 421.5,184.3 416.7,184.9" fill="#e0202c"/>
<polygon points="431.2,196.0 436.2,195.3 438.1,196.7 433.0,197.3" fill="#e0202c"/>
<polygon points="448.9,209.4 454.1,208.7 456.1,210.2 450.9,210.9" fill="#e0202c"/>
<polygon points="468.3,224.2 473.7,223.4 475.9,225.1 470.5,225.9" fill="#e0202c"/>
<polygon points="489.7,240.5 495.3,239.6 497.7,241.4 492.1,242.3" fill="#e0202c"/>
<polygon points="513.3,258.5 519.1,257.5 521.8,259.5 515.9,260.5" fill="#e0202c"/>
<polygon points="539.6,278.5 545.7,277.4 548.7,279.7 542.5,280.7" fill="#e0202c"/>
<polygon points="569.0,300.9 575.4,299.7 578.7,302.2 572.3,303.4" fill="#e0202c"/>
<polygon points="602.1,326.1 608.8,324.8 612.6,327.6 605.9,329.0" fill="#e0202c"/>
<polygon points="639.7,354.8 646.7,353.3 651.0,356.5 644.0,358.1" fill="#e0202c"/>
<polygon points="682.8,387.6 690.1,385.8 695.1,389.6 687.7,391.4" fill="#e0202c"/>
<polygon points="443.6,166.7 448.0,166.2 449.7,167.3 445.2,167.8" fill="#e0202c"/>
<polygon points="460.6,178.0 465.2,177.5 467.1,178.7 462.4,179.2" fill="#e0202c"/>
<polygon points="478.4,189.9 483.2,189.3 485.2,190.6 480.4,191.2" fill="#e0202c"/>
<polygon points="497.8,202.8 502.8,202.1 505.0,203.5 500.0,204.2" fill="#e0202c"/>
<polygon points="519.1,216.9 524.2,216.2 526.6,217.7 521.5,218.5" fill="#e0202c"/>
<polygon points="542.4,232.4 547.8,231.6 550.4,233.3 545.0,234.2" fill="#e0202c"/>
<polygon points="568.2,249.5 573.7,248.6 576.6,250.5 571.1,251.5" fill="#e0202c"/>
<polygon points="596.8,268.5 602.5,267.5 605.8,269.7 600.0,270.7" fill="#e0202c"/>
<polygon points="628.7,289.7 634.7,288.6 638.3,291.0 632.2,292.1" fill="#e0202c"/>
<polygon points="664.5,313.5 670.7,312.3 674.8,314.9 668.5,316.2" fill="#e0202c"/>
<polygon points="705.0,340.4 711.5,339.0 716.1,342.0 709.5,343.5" fill="#e0202c"/>
<polygon points="751.1,371.1 758.0,369.5 763.2,372.9 756.4,374.6" fill="#e0202c"/>
<polygon points="485.9,161.8 490.2,161.3 492.0,162.3 487.7,162.9" fill="#e0202c"/>
<polygon points="504.4,172.7 508.8,172.1 510.8,173.3 506.3,173.8" fill="#e0202c"/>
<polygon points="523.7,184.1 528.3,183.5 530.4,184.7 525.8,185.3" fill="#e0202c"/>
<polygon points="544.7,196.4 549.4,195.8 551.8,197.1 547.0,197.8" fill="#e0202c"/>
<polygon points="567.6,209.9 572.5,209.2 575.1,210.7 570.1,211.4" fill="#e0202c"/>
<polygon points="592.7,224.8 597.8,224.0 600.6,225.6 595.5,226.4" fill="#e0202c"/>
<polygon points="620.4,241.1 625.6,240.2 628.8,242.0 623.5,242.9" fill="#e0202c"/>
<polygon points="651.0,259.1 656.5,258.2 659.9,260.2 654.4,261.1" fill="#e0202c"/>
<polygon points="685.0,279.2 690.7,278.1 694.6,280.4 688.9,281.4" fill="#e0202c"/>
<polygon points="723.2,301.7 729.1,300.5 733.4,303.0 727.5,304.2" fill="#e0202c"/>
<polygon points="766.1,327.0 772.3,325.6 777.1,328.5 771.0,329.8" fill="#e0202c"/>
<polygon points="814.9,355.7 821.3,354.2 826.8,357.4 820.4,359.0" fill="#e0202c"/>
<polygon points="526.7,157.0 530.8,156.6 532.8,157.6 528.6,158.1" fill="#e0202c"/>
<polygon points="546.5,167.5 550.7,167.0 552.8,168.1 548.6,168.6" fill="#e0202c"/>
<polygon points="567.1,178.5 571.5,177.9 573.8,179.1 569.4,179.7" fill="#e0202c"/>
<polygon points="589.5,190.3 594.1,189.7 596.6,191.0 592.0,191.6" fill="#e0202c"/>
<polygon points="613.9,203.3 618.6,202.6 621.4,204.0 616.6,204.7" fill="#e0202c"/>
<polygon points="640.7,217.4 645.5,216.7 648.5,218.3 643.6,219.0" fill="#e0202c"/>
<polygon points="670.0,233.0 675.1,232.2 678.3,233.9 673.3,234.7" fill="#e0202c"/>
<polygon points="702.4,250.2 707.6,249.2 711.3,251.2 706.1,252.1" fill="#e0202c"/>
<polygon points="738.4,269.2 743.8,268.2 747.8,270.3 742.4,271.3" fill="#e0202c"/>
<polygon points="778.5,290.5 784.1,289.3 788.6,291.7 783.0,292.8" fill="#e0202c"/>
<polygon points="823.6,314.3 829.4,313.1 834.5,315.7 828.7,317.0" fill="#e0202c"/>
<polygon points="874.6,341.3 880.6,339.9 886.4,342.9 880.4,344.4" fill="#e0202c"/>
<polygon points="565.9,152.5 569.9,152.0 572.0,153.0 568.0,153.5" fill="#e0202c"/>
<polygon points="586.9,162.6 591.0,162.1 593.3,163.1 589.2,163.6" fill="#e0202c"/>
<polygon points="608.8,173.1 613.0,172.5 615.5,173.7 611.2,174.2" fill="#e0202c"/>
<polygon points="632.5,184.5 636.9,183.9 639.5,185.1 635.1,185.7" fill="#e0202c"/>
<polygon points="658.3,196.9 662.8,196.2 665.7,197.6 661.1,198.3" fill="#e0202c"/>
<polygon points="686.5,210.4 691.1,209.7 694.2,211.2 689.6,211.9" fill="#e0202c"/>
<polygon points="717.3,225.3 722.1,224.5 725.6,226.1 720.8,226.9" fill="#e0202c"/>
<polygon points="751.3,241.6 756.3,240.8 760.1,242.6 755.1,243.5" fill="#e0202c"/>
<polygon points="789.0,259.7 794.1,258.8 798.3,260.8 793.2,261.8" fill="#e0202c"/>
<polygon points="830.9,279.9 836.1,278.8 840.8,281.1 835.6,282.1" fill="#e0202c"/>
<polygon points="877.7,302.4 883.2,301.2 888.5,303.7 883.0,305.0" fill="#e0202c"/>
<polygon points="930.6,327.8 936.2,326.5 942.2,329.3 936.5,330.7" fill="#e0202c"/>
<polygon points="627.0,157.7 631.0,157.2 633.4,158.2 629.4,158.7" fill="#e0202c"/>
<polygon points="650.1,167.8 654.1,167.2 656.7,168.4 652.6,168.9" fill="#e0202c"/>
<polygon points="675.0,178.7 679.2,178.1 681.9,179.3 677.7,179.9" fill="#e0202c"/>
<polygon points="702.0,190.6 706.3,190.0 709.3,191.3 705.0,191.9" fill="#e0202c"/>
<polygon points="762.5,217.9 767.0,217.2 770.6,218.8 766.0,219.5" fill="#e0202c"/>
<polygon points="797.9,233.5 802.6,232.7 806.6,234.4 801.8,235.3" fill="#e0202c"/>
<polygon points="837.0,250.8 841.8,249.8 846.2,251.8 841.3,252.7" fill="#e0202c"/>
<polygon points="880.4,269.9 885.4,268.9 890.2,271.0 885.2,272.0" fill="#e0202c"/>
<polygon points="928.8,291.2 933.9,290.1 939.4,292.4 934.2,293.6" fill="#e0202c"/>
<polygon points="983.2,315.1 988.4,313.9 994.6,316.5 989.3,317.8" fill="#e0202c"/>
<polygon points="805.6,210.9 809.9,210.2 813.7,211.7 809.3,212.4" fill="#e0202c"/>
<polygon points="842.2,225.8 846.7,225.0 850.8,226.7 846.3,227.5" fill="#e0202c"/>
<polygon points="882.6,242.2 887.2,241.4 891.7,243.2 887.1,244.0" fill="#e0202c"/>
<polygon points="927.3,260.4 932.0,259.4 937.0,261.4 932.3,262.4" fill="#e0202c"/>
<polygon points="977.0,280.6 981.9,279.5 987.5,281.8 982.6,282.8" fill="#e0202c"/>
<polygon points="1032.7,303.2 1037.7,302.0 1043.9,304.5 1039.0,305.7" fill="#e0202c"/>
<polygon points="846.8,204.2 850.9,203.5 854.8,205.0 850.6,205.7" fill="#e0202c"/>
<polygon points="884.5,218.5 888.8,217.7 893.0,219.3 888.7,220.0" fill="#e0202c"/>
<polygon points="926.0,234.1 930.4,233.3 935.0,235.0 930.6,235.8" fill="#e0202c"/>
<polygon points="971.8,251.4 976.3,250.5 981.4,252.4 976.9,253.3" fill="#e0202c"/>
<polygon points="1022.7,270.5 1027.3,269.5 1033.0,271.6 1028.3,272.7" fill="#e0202c"/>
<polygon points="1079.4,291.9 1084.1,290.8 1090.5,293.2 1085.8,294.3" fill="#e0202c"/>
<polygon points="445.4,444.9 454.5,442.7 458.1,447.3 448.8,449.6" fill="#e0202c"/>
<polygon points="173.9,266.6 180.8,265.6 181.6,267.7 174.6,268.7" fill="#e0202c"/>
<polygon points="181.2,287.6 188.5,286.5 189.4,288.8 182.1,289.9" fill="#e0202c"/>
<polygon points="236.1,443.6 246.2,441.4 247.9,446.1 237.8,448.3" fill="#e0202c"/>
<polygon points="252.9,491.3 263.7,488.7 265.8,494.2 254.9,496.9" fill="#e0202c"/>
<polygon points="315.7,455.1 325.6,452.8 328.0,457.6 318.1,459.9" fill="#e0202c"/>
<polygon points="393.0,438.1 402.2,435.9 405.3,440.5 395.9,442.7" fill="#e0202c"/>
<polygon points="160.5,598.2 173.8,594.5 175.2,602.2 161.8,605.9" fill="#e0202c"/>
<polygon points="676.0,458.9 684.4,456.6 690.0,461.5 681.5,463.8" fill="#e0202c"/>
<polygon points="263.5,298.3 270.8,297.2 272.2,299.6 264.9,300.8" fill="#e0202c"/>
<polygon points="35.1,215.0 35.0,217.2 34.4,214.8 34.5,212.7" fill="#c81824"/>
<polygon points="41.9,214.2 41.9,216.4 41.4,214.0 41.4,211.9" fill="#c01521"/>
<polygon points="35.0,217.2 41.9,216.4 41.4,214.0 34.4,214.8" fill="#ea3c48"/>
<polygon points="34.5,212.7 41.4,211.9 41.4,214.0 34.4,214.8" fill="#df1f2c"/>
<polygon points="603.9,148.6 606.9,149.9 607.2,148.0 604.2,146.7" fill="#c81824"/>
<polygon points="608.2,148.1 611.2,149.4 611.5,147.5 608.5,146.2" fill="#c01521"/>
<polygon points="606.9,149.9 611.2,149.4 611.5,147.5 607.2,148.0" fill="#ea3c48"/>
<polygon points="604.2,146.7 608.5,146.2 611.5,147.5 607.2,148.0" fill="#df1f2c"/>
<polygon points="34.5,230.4 34.4,232.7 33.9,230.3 33.9,228.0" fill="#c81824"/>
<polygon points="41.8,229.5 41.7,231.8 41.2,229.4 41.2,227.1" fill="#c01521"/>
<polygon points="34.4,232.7 41.7,231.8 41.2,229.4 33.9,230.3" fill="#ea3c48"/>
<polygon points="33.9,228.0 41.2,227.1 41.2,229.4 33.9,230.3" fill="#df1f2c"/>
<polygon points="34.0,247.3 33.9,249.9 33.2,247.4 33.3,244.8" fill="#c81824"/>
<polygon points="41.6,246.3 41.5,248.9 40.9,246.4 41.0,243.8" fill="#c01521"/>
<polygon points="33.9,249.9 41.5,248.9 40.9,246.4 33.2,247.4" fill="#ea3c48"/>
<polygon points="33.3,244.8 41.0,243.8 40.9,246.4 33.2,247.4" fill="#df1f2c"/>
<polygon points="33.3,266.1 33.2,269.0 32.6,266.3 32.7,263.5" fill="#c81824"/>
<polygon points="41.3,265.0 41.3,267.8 40.7,265.2 40.7,262.4" fill="#c01521"/>
<polygon points="33.2,269.0 41.3,267.8 40.7,265.2 32.6,266.3" fill="#ea3c48"/>
<polygon points="32.7,263.5 40.7,262.4 40.7,265.2 32.6,266.3" fill="#df1f2c"/>
<polygon points="32.6,287.0 32.5,290.2 31.8,287.5 31.9,284.3" fill="#c81824"/>
<polygon points="41.1,285.8 41.0,289.0 40.4,286.3 40.4,283.1" fill="#c01521"/>
<polygon points="32.5,290.2 41.0,289.0 40.4,286.3 31.8,287.5" fill="#ea3c48"/>
<polygon points="31.9,284.3 40.4,283.1 40.4,286.3 31.8,287.5" fill="#df1f2c"/>
<polygon points="238.4,257.4 239.9,260.1 239.6,257.6 238.1,254.8" fill="#c81824"/>
<polygon points="245.6,256.3 247.2,259.1 246.9,256.5 245.4,253.8" fill="#c01521"/>
<polygon points="239.9,260.1 247.2,259.1 246.9,256.5 239.6,257.6" fill="#ea3c48"/>
<polygon points="238.1,254.8 245.4,253.8 246.9,256.5 239.6,257.6" fill="#df1f2c"/>
<polygon points="300.1,248.5 302.0,251.1 301.8,248.6 299.9,246.0" fill="#c81824"/>
<polygon points="306.9,247.5 308.9,250.1 308.7,247.6 306.8,245.0" fill="#c01521"/>
<polygon points="302.0,251.1 308.9,250.1 308.7,247.6 301.8,248.6" fill="#ea3c48"/>
<polygon points="299.9,246.0 306.8,245.0 308.7,247.6 301.8,248.6" fill="#df1f2c"/>
<polygon points="31.8,310.4 31.7,314.1 30.9,311.3 31.1,307.6" fill="#c81824"/>
<polygon points="40.8,309.1 40.8,312.7 40.0,309.9 40.1,306.3" fill="#c01521"/>
<polygon points="31.7,314.1 40.8,312.7 40.0,309.9 30.9,311.3" fill="#ea3c48"/>
<polygon points="31.1,307.6 40.1,306.3 40.0,309.9 30.9,311.3" fill="#df1f2c"/>
<polygon points="729.3,203.9 733.8,205.9 734.3,203.6 729.8,201.7" fill="#c81824"/>
<polygon points="734.2,203.2 738.7,205.1 739.2,202.9 734.7,200.9" fill="#c01521"/>
<polygon points="733.8,205.9 738.7,205.1 739.2,202.9 734.3,203.6" fill="#ea3c48"/>
<polygon points="729.8,201.7 734.7,200.9 739.2,202.9 734.3,203.6" fill="#df1f2c"/>
<polygon points="771.2,197.5 775.8,199.4 776.4,197.2 771.8,195.3" fill="#c81824"/>
<polygon points="775.9,196.8 780.5,198.7 781.1,196.5 776.4,194.6" fill="#c01521"/>
<polygon points="775.8,199.4 780.5,198.7 781.1,196.5 776.4,197.2" fill="#ea3c48"/>
<polygon points="771.8,195.3 776.4,194.6 781.1,196.5 776.4,197.2" fill="#df1f2c"/>
<polygon points="811.3,191.4 816.1,193.2 816.7,191.0 811.9,189.2" fill="#c81824"/>
<polygon points="815.8,190.7 820.6,192.5 821.2,190.4 816.4,188.6" fill="#c01521"/>
<polygon points="816.1,193.2 820.6,192.5 821.2,190.4 816.7,191.0" fill="#ea3c48"/>
<polygon points="811.9,189.2 816.4,188.6 821.2,190.4 816.7,191.0" fill="#df1f2c"/>
<polygon points="30.9,337.0 30.7,341.1 30.0,338.1 30.1,334.0" fill="#c81824"/>
<polygon points="40.5,335.4 40.4,339.5 39.7,336.6 39.7,332.5" fill="#c01521"/>
<polygon points="30.7,341.1 40.4,339.5 39.7,336.6 30.0,338.1" fill="#ea3c48"/>
<polygon points="30.1,334.0 39.7,332.5 39.7,336.6 30.0,338.1" fill="#df1f2c"/>
<polygon points="29.9,367.2 29.7,371.9 28.9,368.8 29.0,364.1" fill="#c81824"/>
<polygon points="40.1,365.4 40.1,370.1 39.2,367.0 39.3,362.3" fill="#c01521"/>
<polygon points="29.7,371.9 40.1,370.1 39.2,367.0 28.9,368.8" fill="#ea3c48"/>
<polygon points="29.0,364.1 39.3,362.3 39.2,367.0 28.9,368.8" fill="#df1f2c"/>
<polygon points="28.7,401.9 28.5,407.4 27.6,404.1 27.8,398.7" fill="#c81824"/>
<polygon points="39.7,399.8 39.6,405.3 38.7,402.0 38.8,396.6" fill="#c01521"/>
<polygon points="28.5,407.4 39.6,405.3 38.7,402.0 27.6,404.1" fill="#ea3c48"/>
<polygon points="27.8,398.7 38.8,396.6 38.7,402.0 27.6,404.1" fill="#df1f2c"/>
<polygon points="27.3,442.2 27.1,448.6 26.1,445.2 26.3,438.8" fill="#c81824"/>
<polygon points="39.2,439.8 39.1,446.2 38.2,442.8 38.3,436.4" fill="#c01521"/>
<polygon points="27.1,448.6 39.1,446.2 38.2,442.8 26.1,445.2" fill="#ea3c48"/>
<polygon points="26.3,438.8 38.3,436.4 38.2,442.8 26.1,445.2" fill="#df1f2c"/>
<polygon points="25.7,489.6 25.4,497.2 24.3,493.6 24.6,486.1" fill="#c81824"/>
<polygon points="38.6,486.8 38.5,494.3 37.5,490.7 37.6,483.2" fill="#c01521"/>
<polygon points="25.4,497.2 38.5,494.3 37.5,490.7 24.3,493.6" fill="#ea3c48"/>
<polygon points="24.6,486.1 37.6,483.2 37.5,490.7 24.3,493.6" fill="#df1f2c"/>
<polygon points="328.3,423.1 331.5,429.0 331.4,425.7 328.1,419.7" fill="#c81824"/>
<polygon points="338.5,420.8 341.8,426.7 341.7,423.4 338.4,417.5" fill="#c01521"/>
<polygon points="331.5,429.0 341.8,426.7 341.7,423.4 331.4,425.7" fill="#ea3c48"/>
<polygon points="328.1,419.7 338.4,417.5 341.7,423.4 331.4,425.7" fill="#df1f2c"/>
<polygon points="414.4,404.1 418.4,409.6 418.5,406.4 414.5,400.9" fill="#c81824"/>
<polygon points="423.8,402.0 428.0,407.5 428.1,404.3 423.9,398.8" fill="#c01521"/>
<polygon points="418.4,409.6 428.0,407.5 428.1,404.3 418.5,406.4" fill="#ea3c48"/>
<polygon points="414.5,400.9 423.9,398.8 428.1,404.3 418.5,406.4" fill="#df1f2c"/>
<polygon points="23.7,546.1 23.4,555.3 22.2,551.6 22.6,542.5" fill="#c81824"/>
<polygon points="38.0,542.7 37.9,551.7 36.7,548.0 36.8,539.0" fill="#c01521"/>
<polygon points="23.4,555.3 37.9,551.7 36.7,548.0 22.2,551.6" fill="#ea3c48"/>
<polygon points="22.6,542.5 36.8,539.0 36.7,548.0 22.2,551.6" fill="#df1f2c"/>
<polygon points="333.8,498.7 337.6,506.5 337.5,502.9 333.7,495.1" fill="#c81824"/>
<polygon points="345.4,495.7 349.3,503.5 349.2,499.9 345.3,492.2" fill="#c01521"/>
<polygon points="337.6,506.5 349.3,503.5 349.2,499.9 337.5,502.9" fill="#ea3c48"/>
<polygon points="333.7,495.1 345.3,492.2 349.2,499.9 337.5,502.9" fill="#df1f2c"/>
<polygon points="415.6,478.0 420.3,485.3 420.4,481.8 415.7,474.5" fill="#c81824"/>
<polygon points="426.4,475.3 431.2,482.5 431.4,479.0 426.6,471.8" fill="#c01521"/>
<polygon points="420.3,485.3 431.2,482.5 431.4,479.0 420.4,481.8" fill="#ea3c48"/>
<polygon points="415.7,474.5 426.6,471.8 431.4,479.0 420.4,481.8" fill="#df1f2c"/>
<polygon points="21.4,614.7 21.0,625.9 19.7,622.1 20.1,610.9" fill="#c81824"/>
<polygon points="37.1,610.5 37.0,621.6 35.7,617.7 35.9,606.7" fill="#c01521"/>
<polygon points="21.0,625.9 37.0,621.6 35.7,617.7 19.7,622.1" fill="#ea3c48"/>
<polygon points="20.1,610.9 35.9,606.7 35.7,617.7 19.7,622.1" fill="#df1f2c"/>
<polygon points="152.9,579.6 154.5,589.7 153.7,586.0 152.1,575.9" fill="#c81824"/>
<polygon points="167.1,575.9 168.9,585.8 168.2,582.1 166.4,572.1" fill="#c01521"/>
<polygon points="154.5,589.7 168.9,585.8 168.2,582.1 153.7,586.0" fill="#ea3c48"/>
<polygon points="152.1,575.9 166.4,572.1 168.2,582.1 153.7,586.0" fill="#df1f2c"/>
<polygon points="272.0,547.9 275.2,557.0 274.8,553.3 271.6,544.2" fill="#c81824"/>
<polygon points="284.9,544.4 288.3,553.5 288.0,549.8 284.6,540.8" fill="#c01521"/>
<polygon points="275.2,557.0 288.3,553.5 288.0,549.8 274.8,553.3" fill="#ea3c48"/>
<polygon points="271.6,544.2 284.6,540.8 288.0,549.8 274.8,553.3" fill="#df1f2c"/>
<polygon points="570.2,468.3 576.7,475.4 577.2,471.9 570.7,464.9" fill="#c81824"/>
<polygon points="580.1,465.7 586.7,472.7 587.3,469.2 580.6,462.2" fill="#c01521"/>
<polygon points="576.7,475.4 586.7,472.7 587.3,469.2 577.2,471.9" fill="#ea3c48"/>
<polygon points="570.7,464.9 580.6,462.2 587.3,469.2 577.2,471.9" fill="#df1f2c"/>
<polygon points="653.8,446.0 661.0,452.5 661.8,449.1 654.5,442.7" fill="#c81824"/>
<polygon points="662.9,443.6 670.2,450.0 671.0,446.6 663.7,440.2" fill="#c01521"/>
<polygon points="661.0,452.5 670.2,450.0 671.0,446.6 661.8,449.1" fill="#ea3c48"/>
<polygon points="654.5,442.7 663.7,440.2 671.0,446.6 661.8,449.1" fill="#df1f2c"/>
<polygon points="731.0,425.4 738.9,431.4 739.8,428.1 731.9,422.1" fill="#c81824"/>
<polygon points="739.5,423.2 747.4,429.1 748.4,425.8 740.4,419.9" fill="#c01521"/>
<polygon points="738.9,431.4 747.4,429.1 748.4,425.8 739.8,428.1" fill="#ea3c48"/>
<polygon points="731.9,422.1 740.4,419.9 748.4,425.8 739.8,428.1" fill="#df1f2c"/>
<polygon points="802.5,406.4 810.9,411.9 812.0,408.7 803.6,403.1" fill="#c81824"/>
<polygon points="810.4,404.3 818.8,409.8 819.9,406.5 811.5,401.0" fill="#c01521"/>
<polygon points="810.9,411.9 818.8,409.8 819.9,406.5 812.0,408.7" fill="#ea3c48"/>
<polygon points="803.6,403.1 811.5,401.0 819.9,406.5 812.0,408.7" fill="#df1f2c"/>
<polygon points="869.0,388.6 877.8,393.8 879.0,390.6 870.2,385.5" fill="#c81824"/>
<polygon points="876.3,386.7 885.1,391.8 886.4,388.6 877.5,383.5" fill="#c01521"/>
<polygon points="877.8,393.8 885.1,391.8 886.4,388.6 879.0,390.6" fill="#ea3c48"/>
<polygon points="870.2,385.5 877.5,383.5 886.4,388.6 879.0,390.6" fill="#df1f2c"/>
<polygon points="930.9,372.1 940.0,376.9 941.4,373.8 932.2,369.0" fill="#c81824"/>
<polygon points="937.7,370.3 946.9,375.1 948.2,372.0 939.1,367.2" fill="#c01521"/>
<polygon points="940.0,376.9 946.9,375.1 948.2,372.0 941.4,373.8" fill="#ea3c48"/>
<polygon points="932.2,369.0 939.1,367.2 948.2,372.0 941.4,373.8" fill="#df1f2c"/>
<polygon points="988.7,356.7 998.1,361.2 999.5,358.2 990.1,353.7" fill="#c81824"/>
<polygon points="995.1,355.0 1004.5,359.5 1005.9,356.4 996.5,352.0" fill="#c01521"/>
<polygon points="998.1,361.2 1004.5,359.5 1005.9,356.4 999.5,358.2" fill="#ea3c48"/>
<polygon points="990.1,353.7 996.5,352.0 1005.9,356.4 999.5,358.2" fill="#df1f2c"/>
<polygon points="1042.8,342.3 1052.4,346.5 1053.9,343.5 1044.3,339.3" fill="#c81824"/>
<polygon points="1048.8,340.7 1058.4,344.9 1059.9,341.9 1050.3,337.7" fill="#c01521"/>
<polygon points="1052.4,346.5 1058.4,344.9 1059.9,341.9 1053.9,343.5" fill="#ea3c48"/>
<polygon points="1044.3,339.3 1050.3,337.7 1059.9,341.9 1053.9,343.5" fill="#df1f2c"/>
<polygon points="1093.6,328.7 1103.3,332.7 1104.9,329.8 1095.1,325.8" fill="#c81824"/>
<polygon points="1099.2,327.2 1109.0,331.2 1110.5,328.3 1100.7,324.3" fill="#c01521"/>
<polygon points="1103.3,332.7 1109.0,331.2 1110.5,328.3 1104.9,329.8" fill="#ea3c48"/>
<polygon points="1095.1,325.8 1100.7,324.3 1110.5,328.3 1104.9,329.8" fill="#df1f2c"/>
<polygon points="1141.3,316.0 1151.1,319.7 1152.8,316.9 1142.9,313.2" fill="#c81824"/>
<polygon points="1146.5,314.6 1156.4,318.3 1158.1,315.5 1148.1,311.8" fill="#c01521"/>
<polygon points="1151.1,319.7 1156.4,318.3 1158.1,315.5 1152.8,316.9" fill="#ea3c48"/>
<polygon points="1142.9,313.2 1148.1,311.8 1158.1,315.5 1152.8,316.9" fill="#df1f2c"/>
<polygon points="479.3,492.6 485.0,500.2 485.3,496.7 479.6,489.0" fill="#c81824"/>
<polygon points="490.1,489.7 495.9,497.3 496.2,493.7 490.5,486.2" fill="#c01521"/>
<polygon points="485.0,500.2 495.9,497.3 496.2,493.7 485.3,496.7" fill="#ea3c48"/>
<polygon points="479.6,489.0 490.5,486.2 496.2,493.7 485.3,496.7" fill="#df1f2c"/>
<polygon points="445.8,523.1 451.2,531.6 451.5,527.9 446.0,519.5" fill="#c81824"/>
<polygon points="457.3,519.9 462.9,528.3 463.1,524.7 457.5,516.3" fill="#c01521"/>
<polygon points="451.2,531.6 462.9,528.3 463.1,524.7 451.5,527.9" fill="#ea3c48"/>
<polygon points="446.0,519.5 457.5,516.3 463.1,524.7 451.5,527.9" fill="#df1f2c"/>
<polygon points="528.6,500.2 534.9,508.1 535.4,504.5 529.0,496.7" fill="#c81824"/>
<polygon points="539.3,497.3 545.7,505.0 546.2,501.5 539.7,493.7" fill="#c01521"/>
<polygon points="534.9,508.1 545.7,505.0 546.2,501.5 535.4,504.5" fill="#ea3c48"/>
<polygon points="529.0,496.7 539.7,493.7 546.2,501.5 535.4,504.5" fill="#df1f2c"/>
<polygon points="602.8,479.7 609.9,487.0 610.6,483.5 603.5,476.2" fill="#c81824"/>
<polygon points="612.8,476.9 619.9,484.2 620.6,480.7 613.5,473.5" fill="#c01521"/>
<polygon points="609.9,487.0 619.9,484.2 620.6,480.7 610.6,483.5" fill="#ea3c48"/>
<polygon points="603.5,476.2 613.5,473.5 620.6,480.7 610.6,483.5" fill="#df1f2c"/>
<polygon points="742.3,441.2 750.5,447.5 751.5,444.1 743.3,437.8" fill="#c81824"/>
<polygon points="751.0,438.8 759.2,445.1 760.3,441.7 752.0,435.4" fill="#c01521"/>
<polygon points="750.5,447.5 759.2,445.1 760.3,441.7 751.5,444.1" fill="#ea3c48"/>
<polygon points="743.3,437.8 752.0,435.4 760.3,441.7 751.5,444.1" fill="#df1f2c"/>
<polygon points="47.5,633.2 47.5,645.0 46.3,641.1 46.2,629.3" fill="#c81824"/>
<polygon points="63.5,628.8 63.8,640.4 62.6,636.6 62.3,624.9" fill="#c01521"/>
<polygon points="47.5,645.0 63.8,640.4 62.6,636.6 46.3,641.1" fill="#ea3c48"/>
<polygon points="46.2,629.3 62.3,624.9 62.6,636.6 46.3,641.1" fill="#df1f2c"/>
<polygon points="264.1,573.3 267.4,583.2 267.0,579.5 263.7,569.6" fill="#c81824"/>
<polygon points="277.6,569.6 281.0,579.4 280.7,575.6 277.2,565.9" fill="#c01521"/>
<polygon points="267.4,583.2 281.0,579.4 280.7,575.6 267.0,579.5" fill="#ea3c48"/>
<polygon points="263.7,569.6 277.2,565.9 280.7,575.6 267.0,579.5" fill="#df1f2c"/>
<polygon points="479.6,575.5 486.0,585.5 486.3,581.7 479.9,571.8" fill="#c81824"/>
<polygon points="491.9,571.8 498.4,581.7 498.8,577.9 492.2,568.1" fill="#c01521"/>
<polygon points="486.0,585.5 498.4,581.7 498.8,577.9 486.3,581.7" fill="#ea3c48"/>
<polygon points="479.9,571.8 492.2,568.1 498.8,577.9 486.3,581.7" fill="#df1f2c"/>
<polygon points="567.7,548.7 575.1,557.9 575.8,554.2 568.3,545.0" fill="#c81824"/>
<polygon points="579.1,545.2 586.6,554.3 587.3,550.6 579.7,541.6" fill="#c01521"/>
<polygon points="575.1,557.9 586.6,554.3 587.3,550.6 575.8,554.2" fill="#ea3c48"/>
<polygon points="568.3,545.0 579.7,541.6 587.3,550.6 575.8,554.2" fill="#df1f2c"/>
<polygon points="646.3,524.8 654.5,533.3 655.4,529.6 647.2,521.1" fill="#c81824"/>
<polygon points="656.8,521.6 665.1,530.0 666.0,526.3 657.7,517.9" fill="#c01521"/>
<polygon points="654.5,533.3 665.1,530.0 666.0,526.3 655.4,529.6" fill="#ea3c48"/>
<polygon points="647.2,521.1 657.7,517.9 666.0,526.3 655.4,529.6" fill="#df1f2c"/>
<polygon points="721.8,501.8 730.7,509.6 731.8,506.1 722.9,498.2" fill="#c81824"/>
<polygon points="731.6,498.8 740.5,506.6 741.6,503.0 732.6,495.2" fill="#c01521"/>
<polygon points="730.7,509.6 740.5,506.6 741.6,503.0 731.8,506.1" fill="#ea3c48"/>
<polygon points="722.9,498.2 732.6,495.2 741.6,503.0 731.8,506.1" fill="#df1f2c"/>
<polygon points="284.2,635.0 288.1,646.9 287.7,643.0 283.9,631.2" fill="#c81824"/>
<polygon points="298.8,630.6 302.9,642.3 302.6,638.4 298.5,626.7" fill="#c01521"/>
<polygon points="288.1,646.9 302.9,642.3 302.6,638.4 287.7,643.0" fill="#ea3c48"/>
<polygon points="283.9,631.2 298.5,626.7 302.6,638.4 287.7,643.0" fill="#df1f2c"/>
<polygon points="171.5,669.4 173.7,682.3 172.8,678.4 170.7,665.4" fill="#c81824"/>
<polygon points="187.5,664.5 189.9,677.3 189.1,673.4 186.7,660.6" fill="#c01521"/>
<polygon points="173.7,682.3 189.9,677.3 189.1,673.4 172.8,678.4" fill="#ea3c48"/>
<polygon points="170.7,665.4 186.7,660.6 189.1,673.4 172.8,678.4" fill="#df1f2c"/>
<polygon points="47.7,707.1 47.7,721.4 46.3,717.4 46.3,703.1" fill="#c81824"/>
<polygon points="65.3,701.7 65.6,715.8 64.3,711.9 64.0,697.8" fill="#c01521"/>
<polygon points="47.7,721.4 65.6,715.8 64.3,711.9 46.3,717.4" fill="#ea3c48"/>
<polygon points="46.3,703.1 64.0,697.8 64.3,711.9 46.3,717.4" fill="#df1f2c"/>
<polygon points="173.4,225.9 173.7,226.6 172.6,219.2 172.3,218.5" fill="#b4b4b4"/>
<polygon points="175.5,225.7 175.8,226.4 174.7,219.0 174.4,218.3" fill="#aaa"/>
<polygon points="173.7,226.6 175.8,226.4 174.7,219.0 172.6,219.2" fill="#c9c9c9"/>
<polygon points="172.3,218.5 174.4,218.3 174.7,219.0 172.6,219.2" fill="#bbb"/>
<polygon points="212.2,221.0 212.6,221.7 211.7,214.4 211.4,213.7" fill="#b4b4b4"/>
<polygon points="214.2,220.7 214.6,221.4 213.7,214.1 213.4,213.4" fill="#aaa"/>
<polygon points="212.6,221.7 214.6,221.4 213.7,214.1 211.7,214.4" fill="#c9c9c9"/>
<polygon points="211.4,213.7 213.4,213.4 213.7,214.1 211.7,214.4" fill="#bbb"/>
<polygon points="179.8,242.1 180.1,242.9 179.0,235.2 178.7,234.5" fill="#b4b4b4"/>
<polygon points="182.0,241.8 182.3,242.6 181.2,234.9 180.9,234.2" fill="#aaa"/>
<polygon points="180.1,242.9 182.3,242.6 181.2,234.9 179.0,235.2" fill="#c9c9c9"/>
<polygon points="178.7,234.5 180.9,234.2 181.2,234.9 179.0,235.2" fill="#bbb"/>
<polygon points="220.4,236.7 220.8,237.4 220.0,229.8 219.6,229.1" fill="#b4b4b4"/>
<polygon points="222.5,236.4 222.9,237.1 222.1,229.6 221.7,228.8" fill="#aaa"/>
<polygon points="220.8,237.4 222.9,237.1 222.1,229.6 220.0,229.8" fill="#c9c9c9"/>
<polygon points="219.6,229.1 221.7,228.8 222.1,229.6 220.0,229.8" fill="#bbb"/>
<polygon points="172.3,218.5 213.4,213.4 222.1,229.6 179.0,235.2" fill="#8a8a8a"/>
<polygon points="172.1,216.8 213.2,211.7 221.9,227.8 178.7,233.4" fill="url(#gfl)"/>
<polygon points="172.1,216.8 213.2,211.7 212.0,201.7 170.6,206.7" fill="url(#gbk)"/>
<polygon points="213.2,211.7 221.9,227.8 220.7,217.4 212.0,201.7" fill="#bdbdbd"/>
<polygon points="172.3,218.5 179.0,235.2 177.2,222.9 170.6,206.7" fill="#d2d2d2"/>
<polygon points="179.0,235.2 222.1,229.6 220.7,217.4 177.2,222.9" fill="#f0f0f0"/>
<line x1="183.9" y1="234.6" x2="182.1" y2="222.2" stroke="rgba(0,0,0,0.055)" stroke-width="0.5"/>
<line x1="176.7" y1="216.2" x2="175.3" y2="206.1" stroke="rgba(255,255,255,0.16)" stroke-width="0.5"/>
<line x1="188.7" y1="234.0" x2="187.0" y2="221.6" stroke="rgba(0,0,0,0.055)" stroke-width="0.5"/>
<line x1="181.3" y1="215.6" x2="179.9" y2="205.5" stroke="rgba(255,255,255,0.16)" stroke-width="0.5"/>
<line x1="193.5" y1="233.3" x2="191.9" y2="221.0" stroke="rgba(0,0,0,0.055)" stroke-width="0.5"/>
<line x1="185.9" y1="215.1" x2="184.6" y2="205.0" stroke="rgba(255,255,255,0.16)" stroke-width="0.5"/>
<line x1="198.3" y1="232.7" x2="196.7" y2="220.4" stroke="rgba(0,0,0,0.055)" stroke-width="0.5"/>
<line x1="190.5" y1="214.5" x2="189.2" y2="204.4" stroke="rgba(255,255,255,0.16)" stroke-width="0.5"/>
<line x1="203.1" y1="232.1" x2="201.6" y2="219.8" stroke="rgba(0,0,0,0.055)" stroke-width="0.5"/>
<line x1="195.1" y1="213.9" x2="193.8" y2="203.9" stroke="rgba(255,255,255,0.16)" stroke-width="0.5"/>
<line x1="207.9" y1="231.4" x2="206.4" y2="219.2" stroke="rgba(0,0,0,0.055)" stroke-width="0.5"/>
<line x1="199.6" y1="213.4" x2="198.4" y2="203.3" stroke="rgba(255,255,255,0.16)" stroke-width="0.5"/>
<line x1="212.6" y1="230.8" x2="211.2" y2="218.6" stroke="rgba(0,0,0,0.055)" stroke-width="0.5"/>
<line x1="204.2" y1="212.8" x2="202.9" y2="202.8" stroke="rgba(255,255,255,0.16)" stroke-width="0.5"/>
<line x1="217.4" y1="230.2" x2="216.0" y2="218.0" stroke="rgba(0,0,0,0.055)" stroke-width="0.5"/>
<line x1="208.7" y1="212.3" x2="207.5" y2="202.2" stroke="rgba(255,255,255,0.16)" stroke-width="0.5"/>
<line x1="179.0" y1="235.2" x2="222.1" y2="229.6" stroke="rgba(0,0,0,0.25)" stroke-width="0.7"/>
<polygon points="170.6,206.7 212.0,201.7 220.7,217.4 177.2,222.9" fill="none" stroke="#fbfbfb" stroke-width="0.8" stroke-linejoin="round"/>
<polygon points="353.7,217.5 354.4,218.2 354.2,210.9 353.6,210.3" fill="#b4b4b4"/>
<polygon points="355.6,217.2 356.2,217.9 356.1,210.7 355.4,210.0" fill="#aaa"/>
<polygon points="354.4,218.2 356.2,217.9 356.1,210.7 354.2,210.9" fill="#c9c9c9"/>
<polygon points="353.6,210.3 355.4,210.0 356.1,210.7 354.2,210.9" fill="#bbb"/>
<polygon points="388.8,212.8 389.5,213.5 389.5,206.3 388.8,205.7" fill="#b4b4b4"/>
<polygon points="390.6,212.6 391.3,213.2 391.4,206.1 390.6,205.4" fill="#aaa"/>
<polygon points="389.5,213.5 391.3,213.2 391.4,206.1 389.5,206.3" fill="#c9c9c9"/>
<polygon points="388.8,205.7 390.6,205.4 391.4,206.1 389.5,206.3" fill="#bbb"/>
<polygon points="368.7,232.8 369.4,233.6 369.4,226.1 368.6,225.3" fill="#b4b4b4"/>
<polygon points="370.7,232.6 371.4,233.3 371.3,225.8 370.6,225.1" fill="#aaa"/>
<polygon points="369.4,233.6 371.4,233.3 371.3,225.8 369.4,226.1" fill="#c9c9c9"/>
<polygon points="368.6,225.3 370.6,225.1 371.3,225.8 369.4,226.1" fill="#bbb"/>
<polygon points="405.2,227.7 406.0,228.4 406.1,221.0 405.3,220.3" fill="#b4b4b4"/>
<polygon points="407.1,227.4 407.9,228.1 408.0,220.7 407.2,220.0" fill="#aaa"/>
<polygon points="406.0,228.4 407.9,228.1 408.0,220.7 406.1,221.0" fill="#c9c9c9"/>
<polygon points="405.3,220.3 407.2,220.0 408.0,220.7 406.1,221.0" fill="#bbb"/>
<polygon points="353.6,210.3 390.6,205.4 408.0,220.7 369.4,226.1" fill="#8a8a8a"/>
<polygon points="353.5,208.6 390.6,203.7 408.1,218.9 369.3,224.3" fill="url(#gfl)"/>
<polygon points="353.5,208.6 390.6,203.7 390.7,193.9 353.3,198.6" fill="url(#gbk)"/>
<polygon points="390.6,203.7 408.1,218.9 408.2,208.8 390.7,193.9" fill="#bdbdbd"/>
<polygon points="353.6,210.3 369.4,226.1 369.2,214.0 353.3,198.6" fill="#d2d2d2"/>
<polygon points="369.4,226.1 408.0,220.7 408.2,208.8 369.2,214.0" fill="#f0f0f0"/>
<line x1="373.7" y1="225.5" x2="373.6" y2="213.4" stroke="rgba(0,0,0,0.055)" stroke-width="0.5"/>
<line x1="357.7" y1="208.0" x2="357.5" y2="198.1" stroke="rgba(255,255,255,0.16)" stroke-width="0.5"/>
<line x1="378.1" y1="224.9" x2="378.0" y2="212.8" stroke="rgba(0,0,0,0.055)" stroke-width="0.5"/>
<line x1="361.9" y1="207.5" x2="361.7" y2="197.6" stroke="rgba(255,255,255,0.16)" stroke-width="0.5"/>
<line x1="382.4" y1="224.3" x2="382.4" y2="212.2" stroke="rgba(0,0,0,0.055)" stroke-width="0.5"/>
<line x1="366.0" y1="206.9" x2="365.9" y2="197.1" stroke="rgba(255,255,255,0.16)" stroke-width="0.5"/>
<line x1="386.7" y1="223.7" x2="386.7" y2="211.6" stroke="rgba(0,0,0,0.055)" stroke-width="0.5"/>
<line x1="370.2" y1="206.4" x2="370.1" y2="196.5" stroke="rgba(255,255,255,0.16)" stroke-width="0.5"/>
<line x1="391.0" y1="223.1" x2="391.1" y2="211.1" stroke="rgba(0,0,0,0.055)" stroke-width="0.5"/>
<line x1="374.3" y1="205.9" x2="374.2" y2="196.0" stroke="rgba(255,255,255,0.16)" stroke-width="0.5"/>
<line x1="395.3" y1="222.5" x2="395.4" y2="210.5" stroke="rgba(0,0,0,0.055)" stroke-width="0.5"/>
<line x1="378.4" y1="205.3" x2="378.4" y2="195.5" stroke="rgba(255,255,255,0.16)" stroke-width="0.5"/>
<line x1="399.5" y1="221.9" x2="399.7" y2="209.9" stroke="rgba(0,0,0,0.055)" stroke-width="0.5"/>
<line x1="382.5" y1="204.8" x2="382.5" y2="195.0" stroke="rgba(255,255,255,0.16)" stroke-width="0.5"/>
<line x1="403.8" y1="221.3" x2="404.0" y2="209.3" stroke="rgba(0,0,0,0.055)" stroke-width="0.5"/>
<line x1="386.6" y1="204.3" x2="386.6" y2="194.5" stroke="rgba(255,255,255,0.16)" stroke-width="0.5"/>
<line x1="369.4" y1="226.1" x2="408.0" y2="220.7" stroke="rgba(0,0,0,0.25)" stroke-width="0.7"/>
<polygon points="353.3,198.6 390.7,193.9 408.2,208.8 369.2,214.0" fill="none" stroke="#fbfbfb" stroke-width="0.8" stroke-linejoin="round"/>
<polygon points="372.0,236.2 385.8,250.3 385.8,242.9 372.0,229.1" fill="#35383a"/>
<polygon points="410.2,230.8 425.3,244.4 425.5,237.1 410.3,223.7" fill="#262828"/>
<polygon points="385.8,250.3 425.3,244.4 425.5,237.1 385.8,242.9" fill="#3b3e3e"/>
<polygon points="372.0,229.1 410.3,223.7 425.5,237.1 385.8,242.9" fill="#2f3232"/>
<polygon points="391.0,249.0 405.0,246.9 405.1,241.0 391.0,243.1" fill="#b9b9b9"/>
<polygon points="406.4,246.6 420.2,244.6 420.4,238.8 406.5,240.8" fill="#b9b9b9"/>
<polygon points="373.6,237.4 378.5,242.3 378.5,236.5 373.6,231.6" fill="#8d8f8f"/>
<polygon points="379.0,242.8 384.0,247.9 384.0,242.1 379.0,237.0" fill="#8d8f8f"/>
<polygon points="180.1,242.9 180.4,243.7 179.3,236.0 179.0,235.2" fill="#b4b4b4"/>
<polygon points="182.3,242.6 182.6,243.4 181.5,235.7 181.2,234.9" fill="#aaa"/>
<polygon points="180.4,243.7 182.6,243.4 181.5,235.7 179.3,236.0" fill="#c9c9c9"/>
<polygon points="179.0,235.2 181.2,234.9 181.5,235.7 179.3,236.0" fill="#bbb"/>
<polygon points="220.8,237.4 221.2,238.2 220.4,230.6 220.0,229.8" fill="#b4b4b4"/>
<polygon points="222.9,237.1 223.3,237.9 222.5,230.3 222.1,229.6" fill="#aaa"/>
<polygon points="221.2,238.2 223.3,237.9 222.5,230.3 220.4,230.6" fill="#c9c9c9"/>
<polygon points="220.0,229.8 222.1,229.6 222.5,230.3 220.4,230.6" fill="#bbb"/>
<polygon points="187.2,260.9 187.5,261.8 186.4,253.8 186.1,252.9" fill="#b4b4b4"/>
<polygon points="189.5,260.6 189.8,261.5 188.7,253.5 188.4,252.6" fill="#aaa"/>
<polygon points="187.5,261.8 189.8,261.5 188.7,253.5 186.4,253.8" fill="#c9c9c9"/>
<polygon points="186.1,252.9 188.4,252.6 188.7,253.5 186.4,253.8" fill="#bbb"/>
<polygon points="229.9,254.8 230.4,255.7 229.5,247.8 229.1,247.0" fill="#b4b4b4"/>
<polygon points="232.1,254.5 232.6,255.4 231.7,247.5 231.3,246.6" fill="#aaa"/>
<polygon points="230.4,255.7 232.6,255.4 231.7,247.5 229.5,247.8" fill="#c9c9c9"/>
<polygon points="229.1,247.0 231.3,246.6 231.7,247.5 229.5,247.8" fill="#bbb"/>
<polygon points="179.0,235.2 222.1,229.6 231.7,247.5 186.4,253.8" fill="#8a8a8a"/>
<polygon points="178.7,233.4 221.9,227.8 231.5,245.6 186.2,251.9" fill="url(#gfl)"/>
<polygon points="178.7,233.4 221.9,227.8 220.7,217.4 177.2,222.9" fill="#f4f4f4"/>
<polygon points="178.7,233.4 221.9,227.8 221.7,226.4 178.5,232.0" fill="#d6d6d6"/>
<polygon points="221.9,227.8 231.5,245.6 230.4,234.7 220.7,217.4" fill="#bdbdbd"/>
<polygon points="179.0,235.2 186.4,253.8 184.6,240.9 177.2,222.9" fill="#d2d2d2"/>
<polygon points="186.4,253.8 231.7,247.5 230.4,234.7 184.6,240.9" fill="#f0f0f0"/>
<line x1="191.5" y1="253.1" x2="189.8" y2="240.2" stroke="rgba(0,0,0,0.055)" stroke-width="0.5"/>
<line x1="196.6" y1="252.4" x2="194.9" y2="239.5" stroke="rgba(0,0,0,0.055)" stroke-width="0.5"/>
<line x1="201.7" y1="251.7" x2="200.1" y2="238.8" stroke="rgba(0,0,0,0.055)" stroke-width="0.5"/>
<line x1="206.8" y1="250.9" x2="205.2" y2="238.1" stroke="rgba(0,0,0,0.055)" stroke-width="0.5"/>
<line x1="211.8" y1="250.2" x2="210.2" y2="237.4" stroke="rgba(0,0,0,0.055)" stroke-width="0.5"/>
<line x1="216.8" y1="249.5" x2="215.3" y2="236.8" stroke="rgba(0,0,0,0.055)" stroke-width="0.5"/>
<line x1="221.8" y1="248.8" x2="220.3" y2="236.1" stroke="rgba(0,0,0,0.055)" stroke-width="0.5"/>
<line x1="226.8" y1="248.2" x2="225.4" y2="235.4" stroke="rgba(0,0,0,0.055)" stroke-width="0.5"/>
<line x1="186.4" y1="253.8" x2="231.7" y2="247.5" stroke="rgba(0,0,0,0.25)" stroke-width="0.7"/>
<polygon points="177.2,222.9 220.7,217.4 230.4,234.7 184.6,240.9" fill="none" stroke="#fbfbfb" stroke-width="0.8" stroke-linejoin="round"/>
<polygon points="369.4,233.6 370.1,234.3 370.1,226.8 369.4,226.1" fill="#b4b4b4"/>
<polygon points="371.4,233.3 372.1,234.0 372.0,226.5 371.3,225.8" fill="#aaa"/>
<polygon points="370.1,234.3 372.1,234.0 372.0,226.5 370.1,226.8" fill="#c9c9c9"/>
<polygon points="369.4,226.1 371.3,225.8 372.0,226.5 370.1,226.8" fill="#bbb"/>
<polygon points="406.0,228.4 406.8,229.1 406.9,221.7 406.1,221.0" fill="#b4b4b4"/>
<polygon points="407.9,228.1 408.7,228.8 408.8,221.4 408.0,220.7" fill="#aaa"/>
<polygon points="406.8,229.1 408.7,228.8 408.8,221.4 406.9,221.7" fill="#c9c9c9"/>
<polygon points="406.1,221.0 408.0,220.7 408.8,221.4 406.9,221.7" fill="#bbb"/>
<polygon points="386.0,250.6 386.8,251.4 386.8,243.6 386.0,242.8" fill="#b4b4b4"/>
<polygon points="388.1,250.3 388.9,251.1 388.9,243.3 388.1,242.4" fill="#aaa"/>
<polygon points="386.8,251.4 388.9,251.1 388.9,243.3 386.8,243.6" fill="#c9c9c9"/>
<polygon points="386.0,242.8 388.1,242.4 388.9,243.3 386.8,243.6" fill="#bbb"/>
<polygon points="424.2,244.8 425.0,245.6 425.3,237.9 424.4,237.1" fill="#b4b4b4"/>
<polygon points="426.1,244.5 427.0,245.3 427.3,237.6 426.4,236.8" fill="#aaa"/>
<polygon points="425.0,245.6 427.0,245.3 427.3,237.6 425.3,237.9" fill="#c9c9c9"/>
<polygon points="424.4,237.1 426.4,236.8 427.3,237.6 425.3,237.9" fill="#bbb"/>
<polygon points="369.4,226.1 408.0,220.7 427.3,237.6 386.8,243.6" fill="#8a8a8a"/>
<polygon points="369.3,224.3 408.1,218.9 427.3,235.8 386.8,241.7" fill="url(#gfl)"/>
<polygon points="369.3,224.3 408.1,218.9 408.2,208.8 369.2,214.0" fill="#f4f4f4"/>
<polygon points="369.3,224.3 408.1,218.9 408.1,217.6 369.3,222.9" fill="#d6d6d6"/>
<polygon points="408.1,218.9 427.3,235.8 427.6,225.2 408.2,208.8" fill="#bdbdbd"/>
<polygon points="369.4,226.1 386.8,243.6 386.9,231.0 369.2,214.0" fill="#d2d2d2"/>
<polygon points="386.8,243.6 427.3,237.6 427.6,225.2 386.9,231.0" fill="#f0f0f0"/>
<line x1="391.4" y1="242.9" x2="391.5" y2="230.3" stroke="rgba(0,0,0,0.055)" stroke-width="0.5"/>
<line x1="395.9" y1="242.2" x2="396.1" y2="229.6" stroke="rgba(0,0,0,0.055)" stroke-width="0.5"/>
<line x1="400.5" y1="241.5" x2="400.6" y2="229.0" stroke="rgba(0,0,0,0.055)" stroke-width="0.5"/>
<line x1="405.0" y1="240.9" x2="405.2" y2="228.4" stroke="rgba(0,0,0,0.055)" stroke-width="0.5"/>
<line x1="409.5" y1="240.2" x2="409.7" y2="227.7" stroke="rgba(0,0,0,0.055)" stroke-width="0.5"/>
<line x1="413.9" y1="239.6" x2="414.2" y2="227.1" stroke="rgba(0,0,0,0.055)" stroke-width="0.5"/>
<line x1="418.4" y1="238.9" x2="418.7" y2="226.4" stroke="rgba(0,0,0,0.055)" stroke-width="0.5"/>
<line x1="422.8" y1="238.3" x2="423.2" y2="225.8" stroke="rgba(0,0,0,0.055)" stroke-width="0.5"/>
<line x1="386.8" y1="243.6" x2="427.3" y2="237.6" stroke="rgba(0,0,0,0.25)" stroke-width="0.7"/>
<polygon points="369.2,214.0 408.2,208.8 427.6,225.2 386.9,231.0" fill="none" stroke="#fbfbfb" stroke-width="0.8" stroke-linejoin="round"/>
<polygon points="386.8,251.4 387.6,252.2 387.6,244.4 386.8,243.6" fill="#b4b4b4"/>
<polygon points="388.9,251.1 389.7,251.9 389.7,244.1 388.9,243.3" fill="#aaa"/>
<polygon points="387.6,252.2 389.7,251.9 389.7,244.1 387.6,244.4" fill="#c9c9c9"/>
<polygon points="386.8,243.6 388.9,243.3 389.7,244.1 387.6,244.4" fill="#bbb"/>
<polygon points="425.0,245.6 425.9,246.4 426.2,238.7 425.3,237.9" fill="#b4b4b4"/>
<polygon points="427.0,245.3 427.9,246.1 428.1,238.4 427.3,237.6" fill="#aaa"/>
<polygon points="425.9,246.4 427.9,246.1 428.1,238.4 426.2,238.7" fill="#c9c9c9"/>
<polygon points="425.3,237.9 427.3,237.6 428.1,238.4 426.2,238.7" fill="#bbb"/>
<polygon points="405.3,270.3 406.2,271.2 406.3,263.1 405.4,262.2" fill="#b4b4b4"/>
<polygon points="407.4,269.9 408.3,270.9 408.5,262.7 407.6,261.8" fill="#aaa"/>
<polygon points="406.2,271.2 408.3,270.9 408.5,262.7 406.3,263.1" fill="#c9c9c9"/>
<polygon points="405.4,262.2 407.6,261.8 408.5,262.7 406.3,263.1" fill="#bbb"/>
<polygon points="445.2,263.9 446.2,264.8 446.6,256.7 445.6,255.9" fill="#b4b4b4"/>
<polygon points="447.3,263.6 448.3,264.4 448.7,256.4 447.7,255.5" fill="#aaa"/>
<polygon points="446.2,264.8 448.3,264.4 448.7,256.4 446.6,256.7" fill="#c9c9c9"/>
<polygon points="445.6,255.9 447.7,255.5 448.7,256.4 446.6,256.7" fill="#bbb"/>
<polygon points="386.8,243.6 427.3,237.6 448.7,256.4 406.3,263.1" fill="#8a8a8a"/>
<polygon points="386.8,241.7 427.3,235.8 448.7,254.5 406.4,261.1" fill="url(#gfl)"/>
<polygon points="386.8,241.7 427.3,235.8 427.6,225.2 386.9,231.0" fill="#f4f4f4"/>
<polygon points="386.8,241.7 427.3,235.8 427.4,234.4 386.8,240.3" fill="#d6d6d6"/>
<polygon points="427.3,235.8 448.7,254.5 449.2,243.4 427.6,225.2" fill="#bdbdbd"/>
<polygon points="386.8,243.6 406.3,263.1 406.5,249.9 386.9,231.0" fill="#d2d2d2"/>
<polygon points="406.3,263.1 448.7,256.4 449.2,243.4 406.5,249.9" fill="#f0f0f0"/>
<line x1="411.1" y1="262.3" x2="411.4" y2="249.2" stroke="rgba(0,0,0,0.055)" stroke-width="0.5"/>
<line x1="415.9" y1="261.6" x2="416.2" y2="248.4" stroke="rgba(0,0,0,0.055)" stroke-width="0.5"/>
<line x1="420.6" y1="260.8" x2="421.0" y2="247.7" stroke="rgba(0,0,0,0.055)" stroke-width="0.5"/>
<line x1="425.3" y1="260.1" x2="425.7" y2="247.0" stroke="rgba(0,0,0,0.055)" stroke-width="0.5"/>
<line x1="430.0" y1="259.3" x2="430.5" y2="246.3" stroke="rgba(0,0,0,0.055)" stroke-width="0.5"/>
<line x1="434.7" y1="258.6" x2="435.2" y2="245.6" stroke="rgba(0,0,0,0.055)" stroke-width="0.5"/>
<line x1="439.4" y1="257.9" x2="439.9" y2="244.9" stroke="rgba(0,0,0,0.055)" stroke-width="0.5"/>
<line x1="444.0" y1="257.1" x2="444.6" y2="244.1" stroke="rgba(0,0,0,0.055)" stroke-width="0.5"/>
<line x1="406.3" y1="263.1" x2="448.7" y2="256.4" stroke="rgba(0,0,0,0.25)" stroke-width="0.7"/>
<polygon points="386.9,231.0 427.6,225.2 449.2,243.4 406.5,249.9" fill="none" stroke="#fbfbfb" stroke-width="0.8" stroke-linejoin="round"/>
<polygon points="204.1,303.7 204.5,304.8 203.4,296.1 202.9,295.0" fill="#b4b4b4"/>
<polygon points="206.6,303.3 207.0,304.4 205.9,295.7 205.5,294.6" fill="#aaa"/>
<polygon points="204.5,304.8 207.0,304.4 205.9,295.7 203.4,296.1" fill="#c9c9c9"/>
<polygon points="202.9,295.0 205.5,294.6 205.9,295.7 203.4,296.1" fill="#bbb"/>
<polygon points="251.4,296.1 252.0,297.1 251.2,288.5 250.6,287.5" fill="#b4b4b4"/>
<polygon points="253.9,295.7 254.4,296.7 253.6,288.1 253.1,287.1" fill="#aaa"/>
<polygon points="252.0,297.1 254.4,296.7 253.6,288.1 251.2,288.5" fill="#c9c9c9"/>
<polygon points="250.6,287.5 253.1,287.1 253.6,288.1 251.2,288.5" fill="#bbb"/>
<polygon points="214.0,328.9 214.5,330.1 213.4,321.1 212.9,319.9" fill="#b4b4b4"/>
<polygon points="216.7,328.4 217.2,329.7 216.1,320.6 215.6,319.4" fill="#aaa"/>
<polygon points="214.5,330.1 217.2,329.7 216.1,320.6 213.4,321.1" fill="#c9c9c9"/>
<polygon points="212.9,319.9 215.6,319.4 216.1,320.6 213.4,321.1" fill="#bbb"/>
<polygon points="264.1,320.3 264.7,321.5 263.9,312.5 263.3,311.4" fill="#b4b4b4"/>
<polygon points="266.7,319.9 267.3,321.0 266.6,312.1 265.9,311.0" fill="#aaa"/>
<polygon points="264.7,321.5 267.3,321.0 266.6,312.1 263.9,312.5" fill="#c9c9c9"/>
<polygon points="263.3,311.4 265.9,311.0 266.6,312.1 263.9,312.5" fill="#bbb"/>
<polygon points="202.9,295.0 253.1,287.1 266.6,312.1 213.4,321.1" fill="#8a8a8a"/>
<polygon points="202.7,292.9 252.9,285.1 266.4,310.0 213.1,318.9" fill="url(#gfl)"/>
<polygon points="202.7,292.9 252.9,285.1 251.8,273.3 201.1,281.0" fill="url(#gbk)"/>
<polygon points="252.9,285.1 266.4,310.0 265.3,297.7 251.8,273.3" fill="#bdbdbd"/>
<polygon points="202.9,295.0 213.4,321.1 211.5,306.4 201.1,281.0" fill="#d2d2d2"/>
<polygon points="213.4,321.1 266.6,312.1 265.3,297.7 211.5,306.4" fill="#f0f0f0"/>
<line x1="219.4" y1="320.0" x2="217.6" y2="305.4" stroke="rgba(0,0,0,0.055)" stroke-width="0.5"/>
<line x1="208.3" y1="292.0" x2="206.8" y2="280.1" stroke="rgba(255,255,255,0.16)" stroke-width="0.5"/>
<line x1="225.4" y1="319.0" x2="223.7" y2="304.4" stroke="rgba(0,0,0,0.055)" stroke-width="0.5"/>
<line x1="214.0" y1="291.2" x2="212.5" y2="279.2" stroke="rgba(255,255,255,0.16)" stroke-width="0.5"/>
<line x1="231.3" y1="318.0" x2="229.7" y2="303.4" stroke="rgba(0,0,0,0.055)" stroke-width="0.5"/>
<line x1="219.6" y1="290.3" x2="218.2" y2="278.4" stroke="rgba(255,255,255,0.16)" stroke-width="0.5"/>
<line x1="237.3" y1="317.0" x2="235.7" y2="302.5" stroke="rgba(0,0,0,0.055)" stroke-width="0.5"/>
<line x1="225.2" y1="289.4" x2="223.9" y2="277.5" stroke="rgba(255,255,255,0.16)" stroke-width="0.5"/>
<line x1="243.2" y1="316.0" x2="241.7" y2="301.5" stroke="rgba(0,0,0,0.055)" stroke-width="0.5"/>
<line x1="230.8" y1="288.5" x2="229.5" y2="276.7" stroke="rgba(255,255,255,0.16)" stroke-width="0.5"/>
<line x1="249.1" y1="315.1" x2="247.6" y2="300.5" stroke="rgba(0,0,0,0.055)" stroke-width="0.5"/>
<line x1="236.4" y1="287.7" x2="235.1" y2="275.8" stroke="rgba(255,255,255,0.16)" stroke-width="0.5"/>
<line x1="254.9" y1="314.1" x2="253.6" y2="299.6" stroke="rgba(0,0,0,0.055)" stroke-width="0.5"/>
<line x1="241.9" y1="286.8" x2="240.7" y2="275.0" stroke="rgba(255,255,255,0.16)" stroke-width="0.5"/>
<line x1="260.8" y1="313.1" x2="259.5" y2="298.6" stroke="rgba(0,0,0,0.055)" stroke-width="0.5"/>
<line x1="247.4" y1="285.9" x2="246.3" y2="274.1" stroke="rgba(255,255,255,0.16)" stroke-width="0.5"/>
<line x1="213.4" y1="321.1" x2="266.6" y2="312.1" stroke="rgba(0,0,0,0.25)" stroke-width="0.7"/>
<polygon points="201.1,281.0 251.8,273.3 265.3,297.7 211.5,306.4" fill="none" stroke="#fbfbfb" stroke-width="0.8" stroke-linejoin="round"/>
<polygon points="274.6,292.3 275.2,293.4 274.6,284.8 274.0,283.8" fill="#b4b4b4"/>
<polygon points="277.0,292.0 277.6,293.0 277.0,284.5 276.4,283.5" fill="#aaa"/>
<polygon points="275.2,293.4 277.6,293.0 277.0,284.5 274.6,284.8" fill="#c9c9c9"/>
<polygon points="274.0,283.8 276.4,283.5 277.0,284.5 274.6,284.8" fill="#bbb"/>
<polygon points="319.4,285.1 320.1,286.1 319.7,277.7 319.0,276.8" fill="#b4b4b4"/>
<polygon points="321.7,284.8 322.4,285.8 322.0,277.4 321.3,276.4" fill="#aaa"/>
<polygon points="320.1,286.1 322.4,285.8 322.0,277.4 319.7,277.7" fill="#c9c9c9"/>
<polygon points="319.0,276.8 321.3,276.4 322.0,277.4 319.7,277.7" fill="#bbb"/>
<polygon points="288.6,316.1 289.3,317.3 288.7,308.4 288.0,307.3" fill="#b4b4b4"/>
<polygon points="291.1,315.7 291.8,316.8 291.2,308.0 290.5,306.8" fill="#aaa"/>
<polygon points="289.3,317.3 291.8,316.8 291.2,308.0 288.7,308.4" fill="#c9c9c9"/>
<polygon points="288.0,307.3 290.5,306.8 291.2,308.0 288.7,308.4" fill="#bbb"/>
<polygon points="335.7,308.0 336.5,309.1 336.2,300.4 335.4,299.3" fill="#b4b4b4"/>
<polygon points="338.2,307.6 339.0,308.7 338.7,300.0 337.9,298.9" fill="#aaa"/>
<polygon points="336.5,309.1 339.0,308.7 338.7,300.0 336.2,300.4" fill="#c9c9c9"/>
<polygon points="335.4,299.3 337.9,298.9 338.7,300.0 336.2,300.4" fill="#bbb"/>
<polygon points="274.0,283.8 321.3,276.4 338.7,300.0 288.7,308.4" fill="#8a8a8a"/>
<polygon points="273.8,281.8 321.2,274.4 338.6,297.9 288.5,306.3" fill="url(#gfl)"/>
<polygon points="273.8,281.8 321.2,274.4 320.7,262.9 272.9,270.1" fill="url(#gbk)"/>
<polygon points="321.2,274.4 338.6,297.9 338.2,285.8 320.7,262.9" fill="#bdbdbd"/>
<polygon points="274.0,283.8 288.7,308.4 287.7,294.0 272.9,270.1" fill="#d2d2d2"/>
<polygon points="288.7,308.4 338.7,300.0 338.2,285.8 287.7,294.0" fill="#f0f0f0"/>
<line x1="294.3" y1="307.4" x2="293.4" y2="293.1" stroke="rgba(0,0,0,0.055)" stroke-width="0.5"/>
<line x1="279.2" y1="281.0" x2="278.3" y2="269.3" stroke="rgba(255,255,255,0.16)" stroke-width="0.5"/>
<line x1="300.0" y1="306.5" x2="299.1" y2="292.2" stroke="rgba(0,0,0,0.055)" stroke-width="0.5"/>
<line x1="284.5" y1="280.1" x2="283.7" y2="268.5" stroke="rgba(255,255,255,0.16)" stroke-width="0.5"/>
<line x1="305.6" y1="305.5" x2="304.8" y2="291.3" stroke="rgba(0,0,0,0.055)" stroke-width="0.5"/>
<line x1="289.8" y1="279.3" x2="289.0" y2="267.7" stroke="rgba(255,255,255,0.16)" stroke-width="0.5"/>
<line x1="311.2" y1="304.6" x2="310.4" y2="290.4" stroke="rgba(0,0,0,0.055)" stroke-width="0.5"/>
<line x1="295.1" y1="278.5" x2="294.4" y2="266.9" stroke="rgba(255,255,255,0.16)" stroke-width="0.5"/>
<line x1="316.7" y1="303.7" x2="316.0" y2="289.4" stroke="rgba(0,0,0,0.055)" stroke-width="0.5"/>
<line x1="300.4" y1="277.7" x2="299.7" y2="266.1" stroke="rgba(255,255,255,0.16)" stroke-width="0.5"/>
<line x1="322.2" y1="302.7" x2="321.6" y2="288.5" stroke="rgba(0,0,0,0.055)" stroke-width="0.5"/>
<line x1="305.6" y1="276.9" x2="305.0" y2="265.3" stroke="rgba(255,255,255,0.16)" stroke-width="0.5"/>
<line x1="327.7" y1="301.8" x2="327.2" y2="287.6" stroke="rgba(0,0,0,0.055)" stroke-width="0.5"/>
<line x1="310.9" y1="276.0" x2="310.3" y2="264.5" stroke="rgba(255,255,255,0.16)" stroke-width="0.5"/>
<line x1="333.2" y1="300.9" x2="332.7" y2="286.7" stroke="rgba(0,0,0,0.055)" stroke-width="0.5"/>
<line x1="316.1" y1="275.2" x2="315.5" y2="263.7" stroke="rgba(255,255,255,0.16)" stroke-width="0.5"/>
<line x1="288.7" y1="308.4" x2="338.7" y2="300.0" stroke="rgba(0,0,0,0.25)" stroke-width="0.7"/>
<polygon points="272.9,270.1 320.7,262.9 338.2,285.8 287.7,294.0" fill="none" stroke="#fbfbfb" stroke-width="0.8" stroke-linejoin="round"/>
<polygon points="406.2,271.2 407.1,272.1 407.2,264.0 406.3,263.1" fill="#b4b4b4"/>
<polygon points="408.3,270.9 409.2,271.8 409.4,263.6 408.5,262.7" fill="#aaa"/>
<polygon points="407.1,272.1 409.2,271.8 409.4,263.6 407.2,264.0" fill="#c9c9c9"/>
<polygon points="406.3,263.1 408.5,262.7 409.4,263.6 407.2,264.0" fill="#bbb"/>
<polygon points="446.2,264.8 447.2,265.7 447.6,257.6 446.6,256.7" fill="#b4b4b4"/>
<polygon points="448.3,264.4 449.3,265.3 449.6,257.3 448.7,256.4" fill="#aaa"/>
<polygon points="447.2,265.7 449.3,265.3 449.6,257.3 447.6,257.6" fill="#c9c9c9"/>
<polygon points="446.6,256.7 448.7,256.4 449.6,257.3 447.6,257.6" fill="#bbb"/>
<polygon points="426.9,292.4 427.9,293.4 428.2,284.9 427.2,283.9" fill="#b4b4b4"/>
<polygon points="429.1,292.0 430.2,293.0 430.4,284.5 429.4,283.5" fill="#aaa"/>
<polygon points="427.9,293.4 430.2,293.0 430.4,284.5 428.2,284.9" fill="#c9c9c9"/>
<polygon points="427.2,283.9 429.4,283.5 430.4,284.5 428.2,284.9" fill="#bbb"/>
<polygon points="468.8,285.2 469.9,286.2 470.4,277.8 469.3,276.8" fill="#b4b4b4"/>
<polygon points="470.9,284.8 472.0,285.8 472.6,277.4 471.5,276.5" fill="#aaa"/>
<polygon points="469.9,286.2 472.0,285.8 472.6,277.4 470.4,277.8" fill="#c9c9c9"/>
<polygon points="469.3,276.8 471.5,276.5 472.6,277.4 470.4,277.8" fill="#bbb"/>
<polygon points="406.3,263.1 448.7,256.4 472.6,277.4 428.2,284.9" fill="#8a8a8a"/>
<polygon points="406.4,261.1 448.7,254.5 472.7,275.4 428.2,282.9" fill="url(#gfl)"/>
<polygon points="406.4,261.1 448.7,254.5 449.2,243.4 406.5,249.9" fill="#f4f4f4"/>
<polygon points="406.4,261.1 448.7,254.5 448.8,253.1 406.4,259.7" fill="#d6d6d6"/>
<polygon points="448.7,254.5 472.7,275.4 473.5,263.9 449.2,243.4" fill="#bdbdbd"/>
<polygon points="406.3,263.1 428.2,284.9 428.6,271.2 406.5,249.9" fill="#d2d2d2"/>
<polygon points="428.2,284.9 472.6,277.4 473.5,263.9 428.6,271.2" fill="#f0f0f0"/>
<line x1="433.2" y1="284.1" x2="433.7" y2="270.4" stroke="rgba(0,0,0,0.055)" stroke-width="0.5"/>
<line x1="438.2" y1="283.2" x2="438.7" y2="269.5" stroke="rgba(0,0,0,0.055)" stroke-width="0.5"/>
<line x1="443.2" y1="282.4" x2="443.8" y2="268.7" stroke="rgba(0,0,0,0.055)" stroke-width="0.5"/>
<line x1="448.1" y1="281.6" x2="448.8" y2="267.9" stroke="rgba(0,0,0,0.055)" stroke-width="0.5"/>
<line x1="453.1" y1="280.7" x2="453.7" y2="267.1" stroke="rgba(0,0,0,0.055)" stroke-width="0.5"/>
<line x1="458.0" y1="279.9" x2="458.7" y2="266.3" stroke="rgba(0,0,0,0.055)" stroke-width="0.5"/>
<line x1="462.9" y1="279.1" x2="463.6" y2="265.5" stroke="rgba(0,0,0,0.055)" stroke-width="0.5"/>
<line x1="467.7" y1="278.3" x2="468.6" y2="264.7" stroke="rgba(0,0,0,0.055)" stroke-width="0.5"/>
<line x1="428.2" y1="284.9" x2="472.6" y2="277.4" stroke="rgba(0,0,0,0.25)" stroke-width="0.7"/>
<polygon points="406.5,249.9 449.2,243.4 473.5,263.9 428.6,271.2" fill="none" stroke="#fbfbfb" stroke-width="0.8" stroke-linejoin="round"/>
<polygon points="464.1,261.9 465.1,262.8 465.6,254.8 464.6,253.9" fill="#b4b4b4"/>
<polygon points="466.1,261.6 467.2,262.4 467.6,254.4 466.6,253.6" fill="#aaa"/>
<polygon points="465.1,262.8 467.2,262.4 467.6,254.4 465.6,254.8" fill="#c9c9c9"/>
<polygon points="464.6,253.9 466.6,253.6 467.6,254.4 465.6,254.8" fill="#bbb"/>
<polygon points="502.1,255.8 503.2,256.6 503.9,248.7 502.8,247.9" fill="#b4b4b4"/>
<polygon points="504.1,255.5 505.2,256.3 505.9,248.4 504.8,247.6" fill="#aaa"/>
<polygon points="503.2,256.6 505.2,256.3 505.9,248.4 503.9,248.7" fill="#c9c9c9"/>
<polygon points="502.8,247.9 504.8,247.6 505.9,248.4 503.9,248.7" fill="#bbb"/>
<polygon points="487.5,282.0 488.6,283.0 489.2,274.6 488.1,273.7" fill="#b4b4b4"/>
<polygon points="489.6,281.6 490.7,282.6 491.4,274.3 490.2,273.3" fill="#aaa"/>
<polygon points="488.6,283.0 490.7,282.6 491.4,274.3 489.2,274.6" fill="#c9c9c9"/>
<polygon points="488.1,273.7 490.2,273.3 491.4,274.3 489.2,274.6" fill="#bbb"/>
<polygon points="527.2,275.2 528.4,276.1 529.2,267.9 528.0,267.0" fill="#b4b4b4"/>
<polygon points="529.2,274.8 530.4,275.8 531.3,267.6 530.1,266.6" fill="#aaa"/>
<polygon points="528.4,276.1 530.4,275.8 531.3,267.6 529.2,267.9" fill="#c9c9c9"/>
<polygon points="528.0,267.0 530.1,266.6 531.3,267.6 529.2,267.9" fill="#bbb"/>
<polygon points="464.6,253.9 504.8,247.6 531.3,267.6 489.2,274.6" fill="#8a8a8a"/>
<polygon points="464.7,252.0 504.9,245.7 531.5,265.6 489.4,272.7" fill="url(#gfl)"/>
<polygon points="464.7,252.0 504.9,245.7 505.8,234.9 465.3,241.0" fill="url(#gbk)"/>
<polygon points="504.9,245.7 531.5,265.6 532.7,254.3 505.8,234.9" fill="#bdbdbd"/>
<polygon points="464.6,253.9 489.2,274.6 490.3,261.2 465.3,241.0" fill="#d2d2d2"/>
<polygon points="489.2,274.6 531.3,267.6 532.7,254.3 490.3,261.2" fill="#f0f0f0"/>
<line x1="494.0" y1="273.8" x2="495.1" y2="260.4" stroke="rgba(0,0,0,0.055)" stroke-width="0.5"/>
<line x1="469.2" y1="251.3" x2="469.9" y2="240.3" stroke="rgba(255,255,255,0.16)" stroke-width="0.5"/>
<line x1="498.7" y1="273.0" x2="499.8" y2="259.6" stroke="rgba(0,0,0,0.055)" stroke-width="0.5"/>
<line x1="473.7" y1="250.6" x2="474.4" y2="239.6" stroke="rgba(255,255,255,0.16)" stroke-width="0.5"/>
<line x1="503.4" y1="272.2" x2="504.6" y2="258.8" stroke="rgba(0,0,0,0.055)" stroke-width="0.5"/>
<line x1="478.2" y1="249.9" x2="479.0" y2="238.9" stroke="rgba(255,255,255,0.16)" stroke-width="0.5"/>
<line x1="508.1" y1="271.5" x2="509.3" y2="258.1" stroke="rgba(0,0,0,0.055)" stroke-width="0.5"/>
<line x1="482.7" y1="249.2" x2="483.5" y2="238.3" stroke="rgba(255,255,255,0.16)" stroke-width="0.5"/>
<line x1="512.8" y1="270.7" x2="514.0" y2="257.3" stroke="rgba(0,0,0,0.055)" stroke-width="0.5"/>
<line x1="487.2" y1="248.5" x2="488.0" y2="237.6" stroke="rgba(255,255,255,0.16)" stroke-width="0.5"/>
<line x1="517.5" y1="269.9" x2="518.7" y2="256.6" stroke="rgba(0,0,0,0.055)" stroke-width="0.5"/>
<line x1="491.7" y1="247.8" x2="492.5" y2="236.9" stroke="rgba(255,255,255,0.16)" stroke-width="0.5"/>
<line x1="522.1" y1="269.1" x2="523.4" y2="255.8" stroke="rgba(0,0,0,0.055)" stroke-width="0.5"/>
<line x1="496.1" y1="247.1" x2="497.0" y2="236.2" stroke="rgba(255,255,255,0.16)" stroke-width="0.5"/>
<line x1="526.7" y1="268.3" x2="528.1" y2="255.0" stroke="rgba(0,0,0,0.055)" stroke-width="0.5"/>
<line x1="500.5" y1="246.4" x2="501.4" y2="235.6" stroke="rgba(255,255,255,0.16)" stroke-width="0.5"/>
<line x1="489.2" y1="274.6" x2="531.3" y2="267.6" stroke="rgba(0,0,0,0.25)" stroke-width="0.7"/>
<polygon points="465.3,241.0 505.8,234.9 532.7,254.3 490.3,261.2" fill="none" stroke="#fbfbfb" stroke-width="0.8" stroke-linejoin="round"/>
<polygon points="577.0,244.4 578.2,245.2 579.3,237.5 578.1,236.7" fill="#b4b4b4"/>
<polygon points="578.8,244.1 580.1,244.9 581.1,237.2 579.9,236.4" fill="#aaa"/>
<polygon points="578.2,245.2 580.1,244.9 581.1,237.2 579.3,237.5" fill="#c9c9c9"/>
<polygon points="578.1,236.7 579.9,236.4 581.1,237.2 579.3,237.5" fill="#bbb"/>
<polygon points="611.3,238.9 612.6,239.7 613.8,232.0 612.6,231.3" fill="#b4b4b4"/>
<polygon points="613.1,238.6 614.4,239.4 615.6,231.8 614.3,231.0" fill="#aaa"/>
<polygon points="612.6,239.7 614.4,239.4 615.6,231.8 613.8,232.0" fill="#c9c9c9"/>
<polygon points="612.6,231.3 614.3,231.0 615.6,231.8 613.8,232.0" fill="#bbb"/>
<polygon points="605.2,262.6 606.5,263.4 607.8,255.4 606.4,254.5" fill="#b4b4b4"/>
<polygon points="607.1,262.2 608.4,263.1 609.7,255.1 608.3,254.2" fill="#aaa"/>
<polygon points="606.5,263.4 608.4,263.1 609.7,255.1 607.8,255.4" fill="#c9c9c9"/>
<polygon points="606.4,254.5 608.3,254.2 609.7,255.1 607.8,255.4" fill="#bbb"/>
<polygon points="640.8,256.4 642.2,257.3 643.7,249.4 642.2,248.5" fill="#b4b4b4"/>
<polygon points="642.6,256.1 644.1,257.0 645.5,249.0 644.1,248.2" fill="#aaa"/>
<polygon points="642.2,257.3 644.1,257.0 645.5,249.0 643.7,249.4" fill="#c9c9c9"/>
<polygon points="642.2,248.5 644.1,248.2 645.5,249.0 643.7,249.4" fill="#bbb"/>
<polygon points="578.1,236.7 614.3,231.0 645.5,249.0 607.8,255.4" fill="#8a8a8a"/>
<polygon points="578.3,234.9 614.6,229.2 645.9,247.2 608.1,253.5" fill="url(#gfl)"/>
<polygon points="578.3,234.9 614.6,229.2 616.3,218.8 579.7,224.3" fill="url(#gbk)"/>
<polygon points="614.6,229.2 645.9,247.2 647.9,236.3 616.3,218.8" fill="#bdbdbd"/>
<polygon points="578.1,236.7 607.8,255.4 609.8,242.5 579.7,224.3" fill="#d2d2d2"/>
<polygon points="607.8,255.4 645.5,249.0 647.9,236.3 609.8,242.5" fill="#f0f0f0"/>
<line x1="612.1" y1="254.7" x2="614.1" y2="241.8" stroke="rgba(0,0,0,0.055)" stroke-width="0.5"/>
<line x1="582.4" y1="234.3" x2="583.9" y2="223.7" stroke="rgba(255,255,255,0.16)" stroke-width="0.5"/>
<line x1="616.3" y1="254.0" x2="618.4" y2="241.1" stroke="rgba(0,0,0,0.055)" stroke-width="0.5"/>
<line x1="586.5" y1="233.6" x2="588.0" y2="223.1" stroke="rgba(255,255,255,0.16)" stroke-width="0.5"/>
<line x1="620.5" y1="253.3" x2="622.7" y2="240.4" stroke="rgba(0,0,0,0.055)" stroke-width="0.5"/>
<line x1="590.6" y1="233.0" x2="592.1" y2="222.5" stroke="rgba(255,255,255,0.16)" stroke-width="0.5"/>
<line x1="624.7" y1="252.6" x2="626.9" y2="239.7" stroke="rgba(0,0,0,0.055)" stroke-width="0.5"/>
<line x1="594.6" y1="232.4" x2="596.2" y2="221.8" stroke="rgba(255,255,255,0.16)" stroke-width="0.5"/>
<line x1="628.9" y1="251.8" x2="631.2" y2="239.0" stroke="rgba(0,0,0,0.055)" stroke-width="0.5"/>
<line x1="598.6" y1="231.7" x2="600.2" y2="221.2" stroke="rgba(255,255,255,0.16)" stroke-width="0.5"/>
<line x1="633.1" y1="251.1" x2="635.4" y2="238.3" stroke="rgba(0,0,0,0.055)" stroke-width="0.5"/>
<line x1="602.7" y1="231.1" x2="604.3" y2="220.6" stroke="rgba(255,255,255,0.16)" stroke-width="0.5"/>
<line x1="637.3" y1="250.4" x2="639.5" y2="237.7" stroke="rgba(0,0,0,0.055)" stroke-width="0.5"/>
<line x1="606.7" y1="230.5" x2="608.3" y2="220.0" stroke="rgba(255,255,255,0.16)" stroke-width="0.5"/>
<line x1="641.4" y1="249.7" x2="643.7" y2="237.0" stroke="rgba(0,0,0,0.055)" stroke-width="0.5"/>
<line x1="610.7" y1="229.8" x2="612.3" y2="219.4" stroke="rgba(255,255,255,0.16)" stroke-width="0.5"/>
<line x1="607.8" y1="255.4" x2="645.5" y2="249.0" stroke="rgba(0,0,0,0.25)" stroke-width="0.7"/>
<polygon points="579.7,224.3 616.3,218.8 647.9,236.3 609.8,242.5" fill="none" stroke="#fbfbfb" stroke-width="0.8" stroke-linejoin="round"/>
<polygon points="426.6,293.6 445.6,313.1 445.9,304.8 426.9,285.6" fill="#35383a"/>
<polygon points="470.2,286.1 490.9,304.9 491.5,296.7 470.7,278.2" fill="#262828"/>
<polygon points="445.6,313.1 490.9,304.9 491.5,296.7 445.9,304.8" fill="#3b3e3e"/>
<polygon points="426.9,285.6 470.7,278.2 491.5,296.7 445.9,304.8" fill="#2f3232"/>
<polygon points="451.6,311.4 467.7,308.5 468.1,301.9 451.9,304.8" fill="#b9b9b9"/>
<polygon points="469.3,308.2 485.1,305.3 485.6,298.7 469.7,301.6" fill="#b9b9b9"/>
<polygon points="428.9,295.3 435.5,302.2 435.8,295.7 429.1,288.9" fill="#8d8f8f"/>
<polygon points="436.2,302.9 443.1,310.0 443.4,303.4 436.5,296.4" fill="#8d8f8f"/>
<polygon points="294.8,326.8 308.3,349.8 307.8,341.0 294.3,318.3" fill="#35383a"/>
<polygon points="344.8,317.9 360.7,340.0 360.5,331.3 344.6,309.6" fill="#262828"/>
<polygon points="308.3,349.8 360.7,340.0 360.5,331.3 307.8,341.0" fill="#3b3e3e"/>
<polygon points="294.3,318.3 344.6,309.6 360.5,331.3 307.8,341.0" fill="#2f3232"/>
<polygon points="315.3,347.8 333.9,344.3 333.6,337.4 314.9,340.8" fill="#b9b9b9"/>
<polygon points="335.7,344.0 354.0,340.6 353.8,333.6 335.4,337.0" fill="#b9b9b9"/>
<polygon points="296.4,328.8 301.1,336.9 300.7,330.0 295.9,322.0" fill="#8d8f8f"/>
<polygon points="301.6,337.7 306.6,346.1 306.2,339.1 301.2,330.8" fill="#8d8f8f"/>
<polygon points="454.7,323.3 476.7,345.9 477.3,337.2 455.1,314.9" fill="#35383a"/>
<polygon points="500.9,314.6 524.8,336.3 525.7,327.7 501.6,306.3" fill="#262828"/>
<polygon points="476.7,345.9 524.8,336.3 525.7,327.7 477.3,337.2" fill="#3b3e3e"/>
<polygon points="455.1,314.9 501.6,306.3 525.7,327.7 477.3,337.2" fill="#2f3232"/>
<polygon points="483.1,344.0 500.2,340.6 500.8,333.6 483.6,337.0" fill="#b9b9b9"/>
<polygon points="501.9,340.3 518.7,336.9 519.4,330.0 502.5,333.3" fill="#b9b9b9"/>
<polygon points="457.3,325.4 465.0,333.3 465.4,326.4 457.7,318.6" fill="#8d8f8f"/>
<polygon points="465.8,334.1 473.9,342.4 474.3,335.4 466.3,327.2" fill="#8d8f8f"/>
<polygon points="587.9,368.3 620.3,396.2 622.1,386.8 589.4,359.3" fill="#35383a"/>
<polygon points="635.9,357.7 670.3,384.3 672.4,375.1 637.6,348.8" fill="#262828"/>
<polygon points="620.3,396.2 670.3,384.3 672.4,375.1 622.1,386.8" fill="#3b3e3e"/>
<polygon points="589.4,359.3 637.6,348.8 672.4,375.1 622.1,386.8" fill="#2f3232"/>
<polygon points="627.1,393.9 644.9,389.7 646.4,382.3 628.6,386.4" fill="#b9b9b9"/>
<polygon points="646.7,389.3 664.1,385.1 665.7,377.7 648.2,381.9" fill="#b9b9b9"/>
<polygon points="591.8,370.9 603.2,380.7 604.4,373.3 593.0,363.7" fill="#8d8f8f"/>
<polygon points="604.4,381.7 616.3,391.9 617.6,384.4 605.7,374.3" fill="#8d8f8f"/>
</svg>
<div id="slider"><div style="position:absolute;left:11px;top:8px;width:2px;height:424px;background:#adb5b6"></div><div style="position:absolute;left:10.500px;top:434px;width:3px;height:140px;background:#f4a9a9"></div><div style="position:absolute;left:7.500px;top:428px;width:9px;height:9px;border-radius:50%;background:#fff;border:1px solid #f3b5b5"></div></div>
<div id="toast">Map is now available to use.</div>
</div>
<div id="panel">
<div id="ptitle">Select operation to continue</div>
<div id="pdiv"></div>
<div class="op" style="top:42.3px"><svg width="15" height="15" viewBox="0 0 15 15"><g fill="none" stroke="#333" stroke-width="1"><circle cx="7.500" cy="7.500" r="6"/><path d="M7.500 7.500 L4 3 M7.500 7.500 L12.500 5 M7.500 7.500 L6.500 13 M4 3 L9 2 L12.500 5 L12.500 10 L6.500 13 L2 10 Z"/></g></svg>Global State</div>
<div class="op" style="top:82.8px"><svg width="15" height="15" viewBox="0 0 15 15"><g fill="none" stroke="#333" stroke-width="1.200"><path d="M3 11 H2.500 a1 1 0 0 1 -1 -1 V3 a1.500 1.500 0 0 1 1.500 -1.500 h9 a1.500 1.500 0 0 1 1.500 1.500 V10 a1 1 0 0 1 -1 1 H11.500 M6.500 11 H8.500 M5 4.500 h3"/><circle cx="4.700" cy="11.800" r="1.700"/><circle cx="10.300" cy="11.800" r="1.700"/></g></svg>Robot Move</div>
<div class="op" style="top:123.6px;padding-left:30px"><svg width="15" height="15" viewBox="0 0 15 15"><g fill="none" stroke="#333" stroke-width="1.200"><path d="M13 2 H7 a5.500 5.500 0 0 0 0 11 H13"/><path d="M5 7.500 H13 M7 5.500 L5 7.500 L7 9.500 M9 5.500 h3 M9 9.500 h3" stroke-width="1"/></g></svg>Delocalization</div>
<div class="op" style="top:165px"><svg width="15" height="15" viewBox="0 0 15 15"><g fill="none" stroke="#333" stroke-width="1.200"><path d="M1.500 2 H13.500 M3 4 L12 6.500 M12 4 L3 6.500 M3 7 L12 9.500 M12 7 L3 9.500 M2 11 H13 V13 H2 Z"/><circle cx="4" cy="13.500" r="0.800"/><circle cx="11" cy="13.500" r="0.800"/></g></svg>Robot Lifter</div>
</div>
<div id="rail">
<svg style="position:absolute;left:5px;top:7px" width="14" height="13" viewBox="0 0 14 13"><g fill="none" stroke="#555" stroke-width="1"><path d="M3 10 H2 a1 1 0 0 1 -1 -1 V2.500 a1.500 1.500 0 0 1 1.500 -1.500 h9 a1.500 1.500 0 0 1 1.500 1.500 V9 a1 1 0 0 1 -1 1 H11 M6 10 H8 M6 3.500 h3"/><circle cx="4.500" cy="10.500" r="1.400"/><circle cx="9.500" cy="10.500" r="1.400"/></g></svg>
<div id="redbar"></div><div style="position:absolute;left:23px;top:260px;width:1px;height:61px;background:#a9a9a9"></div><div style="position:absolute;left:23px;top:374px;width:1px;height:11px;background:#a9a9a9"></div>
<svg style="position:absolute;left:6px;top:33px" width="12" height="12" viewBox="0 0 12 12"><g fill="none" stroke="#666" stroke-width="0.900"><circle cx="6" cy="6" r="1.300"/><circle cx="6" cy="6" r="3" stroke-dasharray="2 1"/><path d="M1.200 8 A5.200 5.200 0 0 1 8 1.200 M10.800 4 A5.200 5.200 0 0 1 4 10.800"/></g></svg>
<div id="optxt">Operations</div>
</div>
<div id="foot">
<svg style="position:absolute;left:7px;top:7px" width="40" height="12" viewBox="0 0 40 12"><g fill="none" stroke="#444" stroke-width="1"><rect x="0.500" y="0.500" width="4" height="4" rx="1"/><rect x="6.500" y="0.500" width="4" height="4" rx="1"/><rect x="0.500" y="6.500" width="4" height="4" rx="1"/><rect x="6.500" y="6.500" width="4" height="4" rx="1"/></g><g fill="none" stroke="#777" stroke-width="0.800"><circle cx="30.500" cy="5.500" r="1.200"/><circle cx="30.500" cy="5.500" r="2.800" stroke-dasharray="2 1"/><path d="M26 7.500 A4.800 4.800 0 0 1 32.500 1 M35 3.500 A4.800 4.800 0 0 1 28.500 10"/></g></svg>
</div>
</body>
</html>
